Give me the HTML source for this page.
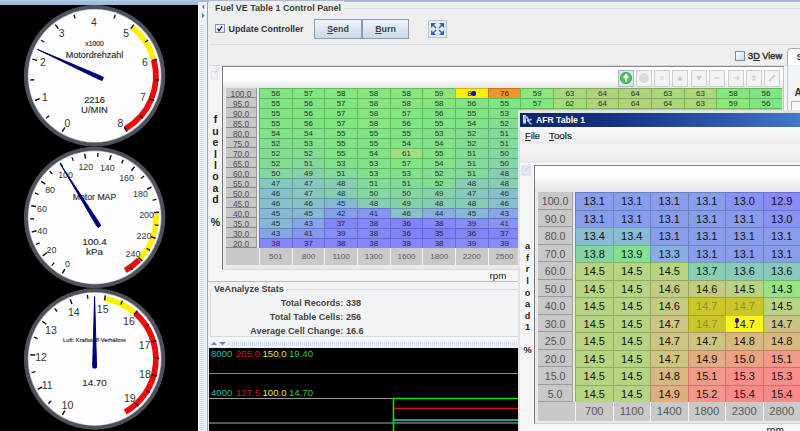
<!DOCTYPE html>
<html><head><meta charset="utf-8"><title>Fuel VE Table 1</title>
<style>
html,body{margin:0;padding:0}
body{width:800px;height:431px;overflow:hidden;position:relative;background:#eeeeee;font-family:"Liberation Sans", sans-serif;font-size:11px;color:#333}
.a{position:absolute}
.b{font-weight:bold}
.c{position:absolute;text-align:center;white-space:nowrap;overflow:hidden}
svg text{font-family:"Liberation Sans", sans-serif}
u{text-decoration:underline}
</style></head><body>

<div class="a" style="left:0;top:0;width:800px;height:2px;background:#a9b9d2"></div>
<div class="a" style="left:0;top:0;width:199px;height:5px;background:linear-gradient(#abcfd8 0,#abcfd8 1.2px,#a2b7e8 2px,#a2b7e8 100%)"></div>
<div class="a" style="left:0;top:5px;width:198px;height:426px;background:#000"></div>
<svg class="a" style="left:0;top:0" width="198" height="431" viewBox="0 0 198 431">
<circle cx="94.6" cy="75.8" r="70.7" fill="#4e505a"/>
<circle cx="94.6" cy="75.8" r="66.9" fill="#a9aab4"/>
<circle cx="94.6" cy="75.8" r="66.2" fill="#fefefe"/>
<path d="M131.92 27.17 A61.300000000000004 61.300000000000004 0 0 1 153.81 59.93" fill="none" stroke="#fff000" stroke-width="5.8"/>
<path d="M153.81 59.93 A61.300000000000004 61.300000000000004 0 0 1 125.25 128.89" fill="none" stroke="#ee0a0a" stroke-width="5.8"/>
<line x1="64.85" y1="127.33" x2="62.35" y2="131.66" stroke="#111" stroke-width="1.5"/>
<line x1="49.11" y1="115.69" x2="46.11" y2="118.33" stroke="#111" stroke-width="1.3"/>
<line x1="39.63" y1="98.57" x2="35.01" y2="100.48" stroke="#111" stroke-width="1.5"/>
<line x1="34.23" y1="79.76" x2="30.24" y2="80.02" stroke="#111" stroke-width="1.3"/>
<line x1="37.13" y1="60.40" x2="32.30" y2="59.11" stroke="#111" stroke-width="1.5"/>
<line x1="44.30" y1="42.19" x2="40.97" y2="39.97" stroke="#111" stroke-width="1.3"/>
<line x1="58.38" y1="28.60" x2="55.33" y2="24.63" stroke="#111" stroke-width="1.5"/>
<line x1="75.15" y1="18.51" x2="73.87" y2="14.72" stroke="#111" stroke-width="1.3"/>
<line x1="114.05" y1="18.51" x2="115.33" y2="14.72" stroke="#111" stroke-width="1.3"/>
<line x1="130.82" y1="28.60" x2="133.87" y2="24.63" stroke="#111" stroke-width="1.5"/>
<line x1="144.90" y1="42.19" x2="148.23" y2="39.97" stroke="#111" stroke-width="1.3"/>
<line x1="152.07" y1="60.40" x2="156.90" y2="59.11" stroke="#111" stroke-width="1.5"/>
<line x1="154.97" y1="79.76" x2="158.96" y2="80.02" stroke="#111" stroke-width="1.3"/>
<line x1="149.57" y1="98.57" x2="154.19" y2="100.48" stroke="#111" stroke-width="1.5"/>
<line x1="140.09" y1="115.69" x2="143.09" y2="118.33" stroke="#111" stroke-width="1.3"/>
<line x1="124.35" y1="127.33" x2="126.85" y2="131.66" stroke="#111" stroke-width="1.5"/>
<text x="67.4" y="126.5" font-size="10.4" text-anchor="middle" fill="#333">0</text>
<text x="45.0" y="100.5" font-size="10.4" text-anchor="middle" fill="#333">1</text>
<text x="42.8" y="66.0" font-size="10.4" text-anchor="middle" fill="#333">2</text>
<text x="61.7" y="37.3" font-size="10.4" text-anchor="middle" fill="#333">3</text>
<text x="93.9" y="26.1" font-size="10.4" text-anchor="middle" fill="#333">4</text>
<text x="126.1" y="37.3" font-size="10.4" text-anchor="middle" fill="#333">5</text>
<text x="145.0" y="66.0" font-size="10.4" text-anchor="middle" fill="#333">6</text>
<text x="142.8" y="100.5" font-size="10.4" text-anchor="middle" fill="#333">7</text>
<text x="120.3" y="126.5" font-size="10.4" text-anchor="middle" fill="#333">8</text>
<text x="94.5" y="46.4" font-size="6.8" font-weight="normal" text-anchor="middle" fill="#2a2a2a" stroke="#2a2a2a" stroke-width="0.15">x1000</text>
<text x="94.5" y="58.4" font-size="9" font-weight="normal" text-anchor="middle" fill="#2a2a2a" stroke="#2a2a2a" stroke-width="0.15">Motordrehzahl</text>
<text x="94.5" y="102.8" font-size="9.3" font-weight="normal" text-anchor="middle" fill="#2a2a2a" stroke="#2a2a2a" stroke-width="0.15">2216</text>
<text x="94.5" y="113.0" font-size="9.5" font-weight="normal" text-anchor="middle" fill="#2a2a2a" stroke="#2a2a2a" stroke-width="0.15">U/MIN</text>
<polygon points="37.67,49.51 100.85,76.05 103.46,77.56 102.14,80.47 99.28,79.51" fill="#00007c" stroke="#00007c" stroke-width="1" stroke-linejoin="round"/>
<circle cx="94.6" cy="217.5" r="70.7" fill="#4e505a"/>
<circle cx="94.6" cy="217.5" r="66.9" fill="#a9aab4"/>
<circle cx="94.6" cy="217.5" r="66.2" fill="#fefefe"/>
<path d="M155.69 212.47 A61.300000000000004 61.300000000000004 0 0 1 139.04 259.72" fill="none" stroke="#fff000" stroke-width="5.8"/>
<path d="M139.04 259.72 A61.300000000000004 61.300000000000004 0 0 1 125.25 270.59" fill="none" stroke="#ee0a0a" stroke-width="5.8"/>
<line x1="64.85" y1="269.03" x2="62.35" y2="273.36" stroke="#111" stroke-width="1.5"/>
<line x1="54.30" y1="262.63" x2="51.64" y2="265.61" stroke="#111" stroke-width="1.3"/>
<line x1="46.75" y1="252.87" x2="42.73" y2="255.84" stroke="#111" stroke-width="1.5"/>
<line x1="39.64" y1="242.79" x2="36.00" y2="244.46" stroke="#111" stroke-width="1.3"/>
<line x1="36.61" y1="230.83" x2="31.74" y2="231.94" stroke="#111" stroke-width="1.5"/>
<line x1="34.11" y1="218.74" x2="30.11" y2="218.82" stroke="#111" stroke-width="1.3"/>
<line x1="36.11" y1="206.57" x2="31.20" y2="205.65" stroke="#111" stroke-width="1.5"/>
<line x1="38.65" y1="194.49" x2="34.95" y2="192.97" stroke="#111" stroke-width="1.3"/>
<line x1="45.34" y1="184.13" x2="41.20" y2="181.32" stroke="#111" stroke-width="1.5"/>
<line x1="52.48" y1="174.07" x2="49.70" y2="171.19" stroke="#111" stroke-width="1.3"/>
<line x1="62.76" y1="167.24" x2="60.08" y2="163.01" stroke="#111" stroke-width="1.5"/>
<line x1="73.33" y1="160.86" x2="71.92" y2="157.12" stroke="#111" stroke-width="1.3"/>
<line x1="85.47" y1="158.70" x2="84.71" y2="153.76" stroke="#111" stroke-width="1.5"/>
<line x1="97.70" y1="157.08" x2="97.91" y2="153.08" stroke="#111" stroke-width="1.3"/>
<line x1="109.70" y1="159.95" x2="110.97" y2="155.11" stroke="#111" stroke-width="1.5"/>
<line x1="121.57" y1="163.34" x2="123.35" y2="159.76" stroke="#111" stroke-width="1.3"/>
<line x1="131.42" y1="170.76" x2="134.52" y2="166.84" stroke="#111" stroke-width="1.5"/>
<line x1="140.95" y1="178.61" x2="144.01" y2="176.04" stroke="#111" stroke-width="1.3"/>
<line x1="147.02" y1="189.35" x2="151.43" y2="186.99" stroke="#111" stroke-width="1.5"/>
<line x1="152.62" y1="200.35" x2="156.45" y2="199.21" stroke="#111" stroke-width="1.3"/>
<line x1="153.90" y1="212.62" x2="158.88" y2="212.21" stroke="#111" stroke-width="1.5"/>
<line x1="154.64" y1="224.93" x2="158.61" y2="225.43" stroke="#111" stroke-width="1.3"/>
<line x1="150.92" y1="236.70" x2="155.65" y2="238.31" stroke="#111" stroke-width="1.5"/>
<line x1="146.68" y1="248.29" x2="150.12" y2="250.32" stroke="#111" stroke-width="1.3"/>
<line x1="138.57" y1="257.58" x2="142.27" y2="260.95" stroke="#111" stroke-width="1.5"/>
<line x1="130.06" y1="266.52" x2="132.40" y2="269.76" stroke="#111" stroke-width="1.3"/>
<text x="67.4" y="267.0" font-size="8.9" text-anchor="middle" fill="#333">0</text>
<text x="51.4" y="252.8" font-size="8.9" text-anchor="middle" fill="#333">20</text>
<text x="42.3" y="233.5" font-size="8.9" text-anchor="middle" fill="#333">40</text>
<text x="41.9" y="212.2" font-size="8.9" text-anchor="middle" fill="#333">60</text>
<text x="50.1" y="192.5" font-size="8.9" text-anchor="middle" fill="#333">80</text>
<text x="65.6" y="177.7" font-size="8.9" text-anchor="middle" fill="#333">100</text>
<text x="85.8" y="170.2" font-size="8.9" text-anchor="middle" fill="#333">120</text>
<text x="107.3" y="171.3" font-size="8.9" text-anchor="middle" fill="#333">140</text>
<text x="126.6" y="180.8" font-size="8.9" text-anchor="middle" fill="#333">160</text>
<text x="140.5" y="197.1" font-size="8.9" text-anchor="middle" fill="#333">180</text>
<text x="146.6" y="217.5" font-size="8.9" text-anchor="middle" fill="#333">200</text>
<text x="144.0" y="238.6" font-size="8.9" text-anchor="middle" fill="#333">220</text>
<text x="133.0" y="257.0" font-size="8.9" text-anchor="middle" fill="#333">240</text>
<text x="94.5" y="200" font-size="8.7" font-weight="normal" text-anchor="middle" fill="#2a2a2a" stroke="#2a2a2a" stroke-width="0.15">Motor MAP</text>
<text x="94.5" y="244.6" font-size="9.8" font-weight="normal" text-anchor="middle" fill="#2a2a2a" stroke="#2a2a2a" stroke-width="0.15">100.4</text>
<text x="94.5" y="255.2" font-size="9.8" font-weight="normal" text-anchor="middle" fill="#2a2a2a" stroke="#2a2a2a" stroke-width="0.15">kPa</text>
<polygon points="61.59,165.93 99.38,223.09 100.71,225.80 97.99,227.49 96.16,225.10" fill="#00007c" stroke="#00007c" stroke-width="1" stroke-linejoin="round"/>
<circle cx="94.6" cy="359" r="70.7" fill="#4e505a"/>
<circle cx="94.6" cy="359" r="66.9" fill="#a9aab4"/>
<circle cx="94.6" cy="359" r="66.2" fill="#fefefe"/>
<path d="M104.80 298.55 A61.300000000000004 61.300000000000004 0 0 1 135.21 313.08" fill="none" stroke="#fff000" stroke-width="5.8"/>
<path d="M135.21 313.08 A61.300000000000004 61.300000000000004 0 0 1 125.25 412.09" fill="none" stroke="#ee0a0a" stroke-width="5.8"/>
<line x1="64.85" y1="410.53" x2="62.35" y2="414.86" stroke="#111" stroke-width="1.5"/>
<line x1="51.11" y1="401.06" x2="48.24" y2="403.84" stroke="#111" stroke-width="1.3"/>
<line x1="42.11" y1="387.01" x2="37.69" y2="389.37" stroke="#111" stroke-width="1.5"/>
<line x1="35.45" y1="371.71" x2="31.54" y2="372.55" stroke="#111" stroke-width="1.3"/>
<line x1="35.23" y1="355.03" x2="30.24" y2="354.69" stroke="#111" stroke-width="1.5"/>
<line x1="37.67" y1="338.52" x2="33.91" y2="337.16" stroke="#111" stroke-width="1.3"/>
<line x1="46.31" y1="324.24" x2="42.25" y2="321.32" stroke="#111" stroke-width="1.5"/>
<line x1="57.11" y1="311.52" x2="54.63" y2="308.38" stroke="#111" stroke-width="1.3"/>
<line x1="71.98" y1="303.97" x2="70.08" y2="299.34" stroke="#111" stroke-width="1.5"/>
<line x1="87.87" y1="298.88" x2="87.43" y2="294.90" stroke="#111" stroke-width="1.3"/>
<line x1="104.50" y1="300.33" x2="105.33" y2="295.40" stroke="#111" stroke-width="1.5"/>
<line x1="120.68" y1="304.41" x2="122.40" y2="300.80" stroke="#111" stroke-width="1.3"/>
<line x1="134.02" y1="314.43" x2="137.33" y2="310.68" stroke="#111" stroke-width="1.5"/>
<line x1="145.59" y1="326.45" x2="148.97" y2="324.29" stroke="#111" stroke-width="1.3"/>
<line x1="151.62" y1="342.01" x2="156.41" y2="340.58" stroke="#111" stroke-width="1.5"/>
<line x1="155.10" y1="358.33" x2="159.10" y2="358.28" stroke="#111" stroke-width="1.3"/>
<line x1="151.99" y1="374.72" x2="156.81" y2="376.04" stroke="#111" stroke-width="1.5"/>
<line x1="146.31" y1="390.41" x2="149.73" y2="392.49" stroke="#111" stroke-width="1.3"/>
<line x1="135.00" y1="402.68" x2="138.40" y2="406.35" stroke="#111" stroke-width="1.5"/>
<text x="67.4" y="409.2" font-size="10.6" text-anchor="middle" fill="#333">10</text>
<text x="47.2" y="388.6" font-size="10.6" text-anchor="middle" fill="#333">11</text>
<text x="41.1" y="360.6" font-size="10.6" text-anchor="middle" fill="#333">12</text>
<text x="51.0" y="333.7" font-size="10.6" text-anchor="middle" fill="#333">13</text>
<text x="73.8" y="315.9" font-size="10.6" text-anchor="middle" fill="#333">14</text>
<text x="102.7" y="312.7" font-size="10.6" text-anchor="middle" fill="#333">15</text>
<text x="128.9" y="325.1" font-size="10.6" text-anchor="middle" fill="#333">16</text>
<text x="144.6" y="349.2" font-size="10.6" text-anchor="middle" fill="#333">17</text>
<text x="144.9" y="377.9" font-size="10.6" text-anchor="middle" fill="#333">18</text>
<text x="129.8" y="402.4" font-size="10.6" text-anchor="middle" fill="#333">19</text>
<text x="94.5" y="341.5" font-size="5.76" font-weight="normal" text-anchor="middle" fill="#2a2a2a" stroke="#2a2a2a" stroke-width="0.15">Luft: Kraftstoff-Verhältnis</text>
<text x="94.5" y="386" font-size="9.8" font-weight="normal" text-anchor="middle" fill="#2a2a2a" stroke="#2a2a2a" stroke-width="0.15">14.70</text>
<polygon points="94.60,296.50 96.50,365.00 96.20,368.00 93.00,368.00 92.70,365.00" fill="#00007c" stroke="#00007c" stroke-width="1" stroke-linejoin="round"/>
</svg>
<div class="a" style="left:198px;top:2px;width:10px;height:429px;background:#eef2f8;border-left:1px solid #fff;box-sizing:border-box"></div>
<svg class="a" style="left:198px;top:3px" width="10" height="428"><polygon points="6.3,1.2 6.3,6.2 3.8,3.7" fill="#6a80ae"/><polygon points="4,9.6 4,15.4 6.8,12.5" fill="#6a80ae"/><line x1="4.5" y1="22" x2="4.5" y2="428" stroke="#cfd9e8" stroke-width="4" stroke-dasharray="1 1"/></svg>
<div class="a" style="left:207px;top:2px;width:593px;height:429px;background:#eeeeee;border-left:1.6px solid #9ca3ae;box-sizing:border-box"></div>
<div class="a" style="left:210px;top:8px;width:590px;height:37px;border-top:1px solid #d6dde9;border-bottom:1px solid #d6dde9;box-sizing:border-box;background:linear-gradient(#f0f0f0,#ededed)"></div>
<div class="a b" style="left:209px;top:0.8px;height:14px;line-height:14px;padding:0 3px 0 6px;background:#eeeeee;font-size:8.95px;color:#3c3c3c">Fuel VE Table 1 Control Panel</div>
<div class="a" style="left:215.4px;top:24.2px;width:9.4px;height:9.2px;border:1px solid #8797b2;box-sizing:border-box;background:linear-gradient(135deg,#fdfeff,#d5e2f4)"></div>
<svg class="a" style="left:215.4px;top:24.2px" width="10" height="10"><path d="M2.4 4.6 L3.9 6.8 L7.1 2.4" fill="none" stroke="#222" stroke-width="1.4"/></svg>
<div class="a b" style="left:228.5px;top:22px;height:14px;line-height:14px;font-size:8.9px;color:#333">Update Controller</div>
<div class="c b" style="left:314px;top:19px;width:48px;height:20px;line-height:19px;box-sizing:border-box;border:1px solid #8d9bb0;background:linear-gradient(#f1f5fa,#dde7f2 50%,#c9d7e8);font-size:8.9px;color:#404040"><u>S</u>end</div>
<div class="c b" style="left:362px;top:19px;width:47px;height:20px;line-height:19px;box-sizing:border-box;border:1px solid #8d9bb0;background:linear-gradient(#f1f5fa,#dde7f2 50%,#c9d7e8);font-size:8.9px;color:#404040"><u>B</u>urn</div>
<div class="a" style="left:428px;top:20px;width:19px;height:18px;box-sizing:border-box;border:1px solid #b5c3d6;background:#e4ecf6"></div>
<svg class="a" style="left:428px;top:20px" width="19" height="18"><g fill="#2f63b4"><polygon points="3,3 8,3 3,8"/><polygon points="16,3 11,3 16,8"/><polygon points="3,15 8,15 3,10"/><polygon points="16,15 11,15 16,10"/></g><g stroke="#2f63b4" stroke-width="1.4"><line x1="4" y1="4" x2="8" y2="8"/><line x1="15" y1="4" x2="11" y2="8"/><line x1="4" y1="14" x2="8" y2="10"/><line x1="15" y1="14" x2="11" y2="10"/></g></svg>
<div class="a" style="left:735px;top:51px;width:10px;height:10px;border:1px solid #7b8aa0;box-sizing:border-box;background:linear-gradient(135deg,#fff,#c8dcf4)"></div>
<div class="a" style="left:748px;top:49px;height:14px;line-height:14px;font-size:9.2px;color:#333;-webkit-text-stroke:0.45px #333">3<u>D</u> View</div>
<div class="a" style="left:787px;top:48px;width:20px;height:18px;border:1px solid #9aa7ba;border-radius:4px 0 0 0;background:#fff;box-sizing:border-box"></div>
<div class="a b" style="left:796.5px;top:50px;font-size:9.5px;line-height:14px">S</div>
<div class="a" style="left:787px;top:65px;width:20px;height:50px;border-left:1px solid #b9c4d4;background:#f2f3f5"></div>
<div class="a b" style="left:794.5px;top:86px;font-size:10px;line-height:14px;color:#333">A</div>
<div class="a" style="left:791px;top:101px;width:12px;height:12px;border:1px solid #aab4c4;background:#fafafa"></div>
<div class="a" style="left:209px;top:65px;width:578px;height:216px;background:#f5f5f5;border-top:1px solid #d3dbe8;box-sizing:border-box"></div>
<div class="a" style="left:221.8px;top:65.8px;width:562.2px;height:204.2px;box-sizing:border-box;border:1.8px solid #787878;border-top-color:#8a8a8a;border-right:1px solid #c4c4c4;border-bottom:1px solid #d8d8d8;background:linear-gradient(#ffffff 0,#fdfdfd 13px,#e2e2e2 22px,#e9e9e9 23px,#eaeaea 100%)"></div>
<svg class="a" style="left:209.5px;top:66px" width="12" height="14"><rect x="1" y="5.5" width="6.5" height="7.5" fill="#e9f0f9" stroke="#d6e0ee" stroke-width="0.8"/><line x1="5" y1="7" x2="9" y2="2" stroke="#e8cfc0" stroke-width="1.3"/></svg>
<div class="c b" style="left:209px;top:113.4px;width:13px;height:12px;line-height:12px;font-size:10.5px;color:#222">f</div>
<div class="c b" style="left:209px;top:124.8px;width:13px;height:12px;line-height:12px;font-size:10.5px;color:#222">u</div>
<div class="c b" style="left:209px;top:136.2px;width:13px;height:12px;line-height:12px;font-size:10.5px;color:#222">e</div>
<div class="c b" style="left:209px;top:147.6px;width:13px;height:12px;line-height:12px;font-size:10.5px;color:#222">l</div>
<div class="c b" style="left:209px;top:159.0px;width:13px;height:12px;line-height:12px;font-size:10.5px;color:#222">l</div>
<div class="c b" style="left:209px;top:170.4px;width:13px;height:12px;line-height:12px;font-size:10.5px;color:#222">o</div>
<div class="c b" style="left:209px;top:181.8px;width:13px;height:12px;line-height:12px;font-size:10.5px;color:#222">a</div>
<div class="c b" style="left:209px;top:193.2px;width:13px;height:12px;line-height:12px;font-size:10.5px;color:#222">d</div>
<div class="c b" style="left:209px;top:216.0px;width:13px;height:12px;line-height:12px;font-size:10.5px;color:#222">%</div>
<div class="a" style="left:617.5px;top:69.5px;width:16px;height:17px;box-sizing:border-box;border:1px solid #9fb8dc;background:#dbe6f5"></div>
<svg class="a" style="left:617.5px;top:70px" width="16" height="16"><circle cx="8" cy="8" r="5.6" fill="#4cc450" stroke="#2f9a35" stroke-width="0.8"/><path d="M8 11.5 V6.5 M5.8 8 L8 5 L10.2 8" fill="none" stroke="#f2fff2" stroke-width="1.9"/></svg>
<div class="a" style="left:636px;top:69.5px;width:16px;height:17px;box-sizing:border-box;border:1px solid #cdcdcd;background:#f3f3f3"></div>
<div class="a" style="left:654px;top:69.5px;width:16px;height:17px;box-sizing:border-box;border:1px solid #cdcdcd;background:#f3f3f3"></div>
<div class="a" style="left:672.3px;top:69.5px;width:16px;height:17px;box-sizing:border-box;border:1px solid #cdcdcd;background:#f3f3f3"></div>
<div class="a" style="left:690.7px;top:69.5px;width:16px;height:17px;box-sizing:border-box;border:1px solid #cdcdcd;background:#f3f3f3"></div>
<div class="a" style="left:709.2px;top:69.5px;width:16px;height:17px;box-sizing:border-box;border:1px solid #cdcdcd;background:#f3f3f3"></div>
<div class="a" style="left:727.6px;top:69.5px;width:16px;height:17px;box-sizing:border-box;border:1px solid #cdcdcd;background:#f3f3f3"></div>
<div class="a" style="left:746.4px;top:69.5px;width:16px;height:17px;box-sizing:border-box;border:1px solid #cdcdcd;background:#f3f3f3"></div>
<div class="a" style="left:764.3px;top:69.5px;width:16px;height:17px;box-sizing:border-box;border:1px solid #cdcdcd;background:#f3f3f3"></div>
<svg class="a" style="left:636px;top:70px" width="16" height="16"><circle cx="8" cy="8" r="5" fill="#dcdcdc"/></svg>
<svg class="a" style="left:654px;top:70px" width="16" height="16"><path d="M6 7h4M6 9h4" stroke="#cecece" stroke-width="1.2"/></svg>
<svg class="a" style="left:672.3px;top:70px" width="16" height="16"><polygon points="8,5.5 10.8,10.5 5.2,10.5" fill="#c8c8c8"/></svg>
<svg class="a" style="left:690.7px;top:70px" width="16" height="16"><polygon points="8,10.8 10.8,6 5.2,6" fill="#c8c8c8"/></svg>
<svg class="a" style="left:709.2px;top:70px" width="16" height="16"><path d="M5.5 8h5" stroke="#c4c4c4" stroke-width="1.3"/></svg>
<svg class="a" style="left:727.6px;top:70px" width="16" height="16"><path d="M5.5 8h5M8.8 6l2 2-2 2" stroke="#d2d2d2" stroke-width="1.2" fill="none"/></svg>
<svg class="a" style="left:746.4px;top:70px" width="16" height="16"><path d="M6 6l4 4M10 6l-4 4M8 5v6" stroke="#d2d2d2" stroke-width="1.3"/></svg>
<svg class="a" style="left:764.3px;top:70px" width="16" height="16"><path d="M5 11l6-6" stroke="#cfcfcf" stroke-width="2"/></svg>
<div class="c" style="left:226px;top:88.4px;width:30px;height:8.98px;line-height:13.18px;background:#c8c8c8;border-bottom:1px solid #858585;border-right:1.6px solid #999;font-size:8.3px;color:#4c4c4c">100.0</div>
<div class="c" style="left:226px;top:98.4px;width:30px;height:8.98px;line-height:13.18px;background:#c8c8c8;border-bottom:1px solid #858585;border-right:1.6px solid #999;font-size:8.3px;color:#4c4c4c">95.0</div>
<div class="c" style="left:226px;top:108.4px;width:30px;height:8.98px;line-height:13.18px;background:#c8c8c8;border-bottom:1px solid #858585;border-right:1.6px solid #999;font-size:8.3px;color:#4c4c4c">90.0</div>
<div class="c" style="left:226px;top:118.3px;width:30px;height:8.98px;line-height:13.18px;background:#c8c8c8;border-bottom:1px solid #858585;border-right:1.6px solid #999;font-size:8.3px;color:#4c4c4c">85.0</div>
<div class="c" style="left:226px;top:128.3px;width:30px;height:8.98px;line-height:13.18px;background:#c8c8c8;border-bottom:1px solid #858585;border-right:1.6px solid #999;font-size:8.3px;color:#4c4c4c">80.0</div>
<div class="c" style="left:226px;top:138.3px;width:30px;height:8.98px;line-height:13.18px;background:#c8c8c8;border-bottom:1px solid #858585;border-right:1.6px solid #999;font-size:8.3px;color:#4c4c4c">75.0</div>
<div class="c" style="left:226px;top:148.3px;width:30px;height:8.98px;line-height:13.18px;background:#c8c8c8;border-bottom:1px solid #858585;border-right:1.6px solid #999;font-size:8.3px;color:#4c4c4c">70.0</div>
<div class="c" style="left:226px;top:158.3px;width:30px;height:8.98px;line-height:13.18px;background:#c8c8c8;border-bottom:1px solid #858585;border-right:1.6px solid #999;font-size:8.3px;color:#4c4c4c">65.0</div>
<div class="c" style="left:226px;top:168.2px;width:30px;height:8.98px;line-height:13.18px;background:#c8c8c8;border-bottom:1px solid #858585;border-right:1.6px solid #999;font-size:8.3px;color:#4c4c4c">60.0</div>
<div class="c" style="left:226px;top:178.2px;width:30px;height:8.98px;line-height:13.18px;background:#c8c8c8;border-bottom:1px solid #858585;border-right:1.6px solid #999;font-size:8.3px;color:#4c4c4c">55.0</div>
<div class="c" style="left:226px;top:188.2px;width:30px;height:8.98px;line-height:13.18px;background:#c8c8c8;border-bottom:1px solid #858585;border-right:1.6px solid #999;font-size:8.3px;color:#4c4c4c">50.0</div>
<div class="c" style="left:226px;top:198.2px;width:30px;height:8.98px;line-height:13.18px;background:#c8c8c8;border-bottom:1px solid #858585;border-right:1.6px solid #999;font-size:8.3px;color:#4c4c4c">45.0</div>
<div class="c" style="left:226px;top:208.2px;width:30px;height:8.98px;line-height:13.18px;background:#c8c8c8;border-bottom:1px solid #858585;border-right:1.6px solid #999;font-size:8.3px;color:#4c4c4c">40.0</div>
<div class="c" style="left:226px;top:218.1px;width:30px;height:8.98px;line-height:13.18px;background:#c8c8c8;border-bottom:1px solid #858585;border-right:1.6px solid #999;font-size:8.3px;color:#4c4c4c">35.0</div>
<div class="c" style="left:226px;top:228.1px;width:30px;height:8.98px;line-height:13.18px;background:#c8c8c8;border-bottom:1px solid #858585;border-right:1.6px solid #999;font-size:8.3px;color:#4c4c4c">30.0</div>
<div class="c" style="left:226px;top:238.1px;width:30px;height:8.98px;line-height:13.18px;background:#c8c8c8;border-bottom:1px solid #858585;border-right:1.6px solid #999;font-size:8.3px;color:#4c4c4c">20.0</div>
<div class="c" style="left:258.90px;top:88.4px;width:32.68px;height:9.98px;line-height:10.38px;box-sizing:border-box;background:#80e683;border-left:1px solid #64b466;border-top:1px solid #64b466;font-size:8.0px;color:#1c331d">56</div>
<div class="c" style="left:291.58px;top:88.4px;width:32.68px;height:9.98px;line-height:10.38px;box-sizing:border-box;background:#80e880;border-left:1px solid #64b564;border-top:1px solid #64b564;font-size:8.0px;color:#1c331c">57</div>
<div class="c" style="left:324.26px;top:88.4px;width:32.68px;height:9.98px;line-height:10.38px;box-sizing:border-box;background:#87e77f;border-left:1px solid #6ab463;border-top:1px solid #6ab463;font-size:8.0px;color:#1e331c">58</div>
<div class="c" style="left:356.94px;top:88.4px;width:32.68px;height:9.98px;line-height:10.38px;box-sizing:border-box;background:#87e77f;border-left:1px solid #6ab463;border-top:1px solid #6ab463;font-size:8.0px;color:#1e331c">58</div>
<div class="c" style="left:389.62px;top:88.4px;width:32.68px;height:9.98px;line-height:10.38px;box-sizing:border-box;background:#87e77f;border-left:1px solid #6ab463;border-top:1px solid #6ab463;font-size:8.0px;color:#1e331c">58</div>
<div class="c" style="left:422.30px;top:88.4px;width:32.68px;height:9.98px;line-height:10.38px;box-sizing:border-box;background:#8fe57e;border-left:1px solid #6fb362;border-top:1px solid #6fb362;font-size:8.0px;color:#1f321c">59</div>
<div class="c" style="left:454.98px;top:88.4px;width:32.68px;height:9.98px;line-height:10.38px;box-sizing:border-box;background:#fff00a;border-left:1px solid #c7bb08;border-top:1px solid #c7bb08;font-size:8.0px;color:#370d0d">84</div>
<div class="c" style="left:487.66px;top:88.4px;width:32.68px;height:9.98px;line-height:10.38px;box-sizing:border-box;background:#f09628;border-left:1px solid #bb751f;border-top:1px solid #bb751f;font-size:8.0px;color:#352109">76</div>
<div class="c" style="left:520.34px;top:88.4px;width:32.68px;height:9.98px;line-height:10.38px;box-sizing:border-box;background:#8fe57e;border-left:1px solid #6fb362;border-top:1px solid #6fb362;font-size:8.0px;color:#1f321c">59</div>
<div class="c" style="left:553.02px;top:88.4px;width:32.68px;height:9.98px;line-height:10.38px;box-sizing:border-box;background:#aad87d;border-left:1px solid #85a862;border-top:1px solid #85a862;font-size:8.0px;color:#25301c">63</div>
<div class="c" style="left:585.70px;top:88.4px;width:32.68px;height:9.98px;line-height:10.38px;box-sizing:border-box;background:#afd47d;border-left:1px solid #88a562;border-top:1px solid #88a562;font-size:8.0px;color:#262f1c">64</div>
<div class="c" style="left:618.38px;top:88.4px;width:32.68px;height:9.98px;line-height:10.38px;box-sizing:border-box;background:#afd47d;border-left:1px solid #88a562;border-top:1px solid #88a562;font-size:8.0px;color:#262f1c">64</div>
<div class="c" style="left:651.06px;top:88.4px;width:32.68px;height:9.98px;line-height:10.38px;box-sizing:border-box;background:#aad87d;border-left:1px solid #85a862;border-top:1px solid #85a862;font-size:8.0px;color:#25301c">63</div>
<div class="c" style="left:683.74px;top:88.4px;width:32.68px;height:9.98px;line-height:10.38px;box-sizing:border-box;background:#aad87d;border-left:1px solid #85a862;border-top:1px solid #85a862;font-size:8.0px;color:#25301c">63</div>
<div class="c" style="left:716.42px;top:88.4px;width:32.68px;height:9.98px;line-height:10.38px;box-sizing:border-box;background:#87e77f;border-left:1px solid #6ab463;border-top:1px solid #6ab463;font-size:8.0px;color:#1e331c">58</div>
<div class="c" style="left:749.10px;top:88.4px;width:32.68px;height:9.98px;line-height:10.38px;box-sizing:border-box;background:#80e683;border-left:1px solid #64b466;border-top:1px solid #64b466;font-size:8.0px;color:#1c331d">56</div>
<div class="c" style="left:258.90px;top:98.4px;width:32.68px;height:9.98px;line-height:10.38px;box-sizing:border-box;background:#81e586;border-left:1px solid #65b369;border-top:1px solid #65b369;font-size:8.0px;color:#1c321d">55</div>
<div class="c" style="left:291.58px;top:98.4px;width:32.68px;height:9.98px;line-height:10.38px;box-sizing:border-box;background:#80e683;border-left:1px solid #64b466;border-top:1px solid #64b466;font-size:8.0px;color:#1c331d">56</div>
<div class="c" style="left:324.26px;top:98.4px;width:32.68px;height:9.98px;line-height:10.38px;box-sizing:border-box;background:#80e880;border-left:1px solid #64b564;border-top:1px solid #64b564;font-size:8.0px;color:#1c331c">57</div>
<div class="c" style="left:356.94px;top:98.4px;width:32.68px;height:9.98px;line-height:10.38px;box-sizing:border-box;background:#87e77f;border-left:1px solid #6ab463;border-top:1px solid #6ab463;font-size:8.0px;color:#1e331c">58</div>
<div class="c" style="left:389.62px;top:98.4px;width:32.68px;height:9.98px;line-height:10.38px;box-sizing:border-box;background:#87e77f;border-left:1px solid #6ab463;border-top:1px solid #6ab463;font-size:8.0px;color:#1e331c">58</div>
<div class="c" style="left:422.30px;top:98.4px;width:32.68px;height:9.98px;line-height:10.38px;box-sizing:border-box;background:#87e77f;border-left:1px solid #6ab463;border-top:1px solid #6ab463;font-size:8.0px;color:#1e331c">58</div>
<div class="c" style="left:454.98px;top:98.4px;width:32.68px;height:9.98px;line-height:10.38px;box-sizing:border-box;background:#80e683;border-left:1px solid #64b466;border-top:1px solid #64b466;font-size:8.0px;color:#1c331d">56</div>
<div class="c" style="left:487.66px;top:98.4px;width:32.68px;height:9.98px;line-height:10.38px;box-sizing:border-box;background:#81e586;border-left:1px solid #65b369;border-top:1px solid #65b369;font-size:8.0px;color:#1c321d">55</div>
<div class="c" style="left:520.34px;top:98.4px;width:32.68px;height:9.98px;line-height:10.38px;box-sizing:border-box;background:#80e880;border-left:1px solid #64b564;border-top:1px solid #64b564;font-size:8.0px;color:#1c331c">57</div>
<div class="c" style="left:553.02px;top:98.4px;width:32.68px;height:9.98px;line-height:10.38px;box-sizing:border-box;background:#a5dc7d;border-left:1px solid #81ac62;border-top:1px solid #81ac62;font-size:8.0px;color:#24301c">62</div>
<div class="c" style="left:585.70px;top:98.4px;width:32.68px;height:9.98px;line-height:10.38px;box-sizing:border-box;background:#afd47d;border-left:1px solid #88a562;border-top:1px solid #88a562;font-size:8.0px;color:#262f1c">64</div>
<div class="c" style="left:618.38px;top:98.4px;width:32.68px;height:9.98px;line-height:10.38px;box-sizing:border-box;background:#afd47d;border-left:1px solid #88a562;border-top:1px solid #88a562;font-size:8.0px;color:#262f1c">64</div>
<div class="c" style="left:651.06px;top:98.4px;width:32.68px;height:9.98px;line-height:10.38px;box-sizing:border-box;background:#afd47d;border-left:1px solid #88a562;border-top:1px solid #88a562;font-size:8.0px;color:#262f1c">64</div>
<div class="c" style="left:683.74px;top:98.4px;width:32.68px;height:9.98px;line-height:10.38px;box-sizing:border-box;background:#aad87d;border-left:1px solid #85a862;border-top:1px solid #85a862;font-size:8.0px;color:#25301c">63</div>
<div class="c" style="left:716.42px;top:98.4px;width:32.68px;height:9.98px;line-height:10.38px;box-sizing:border-box;background:#8fe57e;border-left:1px solid #6fb362;border-top:1px solid #6fb362;font-size:8.0px;color:#1f321c">59</div>
<div class="c" style="left:749.10px;top:98.4px;width:32.68px;height:9.98px;line-height:10.38px;box-sizing:border-box;background:#80e683;border-left:1px solid #64b466;border-top:1px solid #64b466;font-size:8.0px;color:#1c331d">56</div>
<div class="c" style="left:258.90px;top:108.4px;width:32.68px;height:9.98px;line-height:10.38px;box-sizing:border-box;background:#81e586;border-left:1px solid #65b369;border-top:1px solid #65b369;font-size:8.0px;color:#1c321d">55</div>
<div class="c" style="left:291.58px;top:108.4px;width:32.68px;height:9.98px;line-height:10.38px;box-sizing:border-box;background:#80e683;border-left:1px solid #64b466;border-top:1px solid #64b466;font-size:8.0px;color:#1c331d">56</div>
<div class="c" style="left:324.26px;top:108.4px;width:32.68px;height:9.98px;line-height:10.38px;box-sizing:border-box;background:#80e880;border-left:1px solid #64b564;border-top:1px solid #64b564;font-size:8.0px;color:#1c331c">57</div>
<div class="c" style="left:356.94px;top:108.4px;width:32.68px;height:9.98px;line-height:10.38px;box-sizing:border-box;background:#87e77f;border-left:1px solid #6ab463;border-top:1px solid #6ab463;font-size:8.0px;color:#1e331c">58</div>
<div class="c" style="left:389.62px;top:108.4px;width:32.68px;height:9.98px;line-height:10.38px;box-sizing:border-box;background:#80e880;border-left:1px solid #64b564;border-top:1px solid #64b564;font-size:8.0px;color:#1c331c">57</div>
<div class="c" style="left:422.30px;top:108.4px;width:32.68px;height:9.98px;line-height:10.38px;box-sizing:border-box;background:#80e683;border-left:1px solid #64b466;border-top:1px solid #64b466;font-size:8.0px;color:#1c331d">56</div>
<div class="c" style="left:454.98px;top:108.4px;width:32.68px;height:9.98px;line-height:10.38px;box-sizing:border-box;background:#81e586;border-left:1px solid #65b369;border-top:1px solid #65b369;font-size:8.0px;color:#1c321d">55</div>
<div class="c" style="left:487.66px;top:108.4px;width:32.68px;height:9.98px;line-height:10.38px;box-sizing:border-box;background:#82e28c;border-left:1px solid #65b06d;border-top:1px solid #65b06d;font-size:8.0px;color:#1d321f">53</div>
<div class="c" style="left:520.34px;top:108.4px;width:32.68px;height:9.98px;line-height:10.38px;box-sizing:border-box;background:#81e586;border-left:1px solid #65b369;border-top:1px solid #65b369;font-size:8.0px;color:#1c321d"></div>
<div class="c" style="left:553.02px;top:108.4px;width:32.68px;height:9.98px;line-height:10.38px;box-sizing:border-box;background:#96e47d;border-left:1px solid #75b262;border-top:1px solid #75b262;font-size:8.0px;color:#21321c"></div>
<div class="c" style="left:585.70px;top:108.4px;width:32.68px;height:9.98px;line-height:10.38px;box-sizing:border-box;background:#aad87d;border-left:1px solid #85a862;border-top:1px solid #85a862;font-size:8.0px;color:#25301c"></div>
<div class="c" style="left:618.38px;top:108.4px;width:32.68px;height:9.98px;line-height:10.38px;box-sizing:border-box;background:#afd47d;border-left:1px solid #88a562;border-top:1px solid #88a562;font-size:8.0px;color:#262f1c"></div>
<div class="c" style="left:651.06px;top:108.4px;width:32.68px;height:9.98px;line-height:10.38px;box-sizing:border-box;background:#aad87d;border-left:1px solid #85a862;border-top:1px solid #85a862;font-size:8.0px;color:#25301c"></div>
<div class="c" style="left:683.74px;top:108.4px;width:32.68px;height:9.98px;line-height:10.38px;box-sizing:border-box;background:#a5dc7d;border-left:1px solid #81ac62;border-top:1px solid #81ac62;font-size:8.0px;color:#24301c"></div>
<div class="c" style="left:716.42px;top:108.4px;width:32.68px;height:9.98px;line-height:10.38px;box-sizing:border-box;background:#87e77f;border-left:1px solid #6ab463;border-top:1px solid #6ab463;font-size:8.0px;color:#1e331c"></div>
<div class="c" style="left:749.10px;top:108.4px;width:32.68px;height:9.98px;line-height:10.38px;box-sizing:border-box;background:#81e586;border-left:1px solid #65b369;border-top:1px solid #65b369;font-size:8.0px;color:#1c321d"></div>
<div class="c" style="left:258.90px;top:118.3px;width:32.68px;height:9.98px;line-height:10.38px;box-sizing:border-box;background:#81e586;border-left:1px solid #65b369;border-top:1px solid #65b369;font-size:8.0px;color:#1c321d">55</div>
<div class="c" style="left:291.58px;top:118.3px;width:32.68px;height:9.98px;line-height:10.38px;box-sizing:border-box;background:#80e683;border-left:1px solid #64b466;border-top:1px solid #64b466;font-size:8.0px;color:#1c331d">56</div>
<div class="c" style="left:324.26px;top:118.3px;width:32.68px;height:9.98px;line-height:10.38px;box-sizing:border-box;background:#80e880;border-left:1px solid #64b564;border-top:1px solid #64b564;font-size:8.0px;color:#1c331c">57</div>
<div class="c" style="left:356.94px;top:118.3px;width:32.68px;height:9.98px;line-height:10.38px;box-sizing:border-box;background:#87e77f;border-left:1px solid #6ab463;border-top:1px solid #6ab463;font-size:8.0px;color:#1e331c">58</div>
<div class="c" style="left:389.62px;top:118.3px;width:32.68px;height:9.98px;line-height:10.38px;box-sizing:border-box;background:#80e683;border-left:1px solid #64b466;border-top:1px solid #64b466;font-size:8.0px;color:#1c331d">56</div>
<div class="c" style="left:422.30px;top:118.3px;width:32.68px;height:9.98px;line-height:10.38px;box-sizing:border-box;background:#81e586;border-left:1px solid #65b369;border-top:1px solid #65b369;font-size:8.0px;color:#1c321d">55</div>
<div class="c" style="left:454.98px;top:118.3px;width:32.68px;height:9.98px;line-height:10.38px;box-sizing:border-box;background:#82e489;border-left:1px solid #65b16b;border-top:1px solid #65b16b;font-size:8.0px;color:#1c321e">54</div>
<div class="c" style="left:487.66px;top:118.3px;width:32.68px;height:9.98px;line-height:10.38px;box-sizing:border-box;background:#83de93;border-left:1px solid #66ad72;border-top:1px solid #66ad72;font-size:8.0px;color:#1d3120">52</div>
<div class="c" style="left:258.90px;top:128.3px;width:32.68px;height:9.98px;line-height:10.38px;box-sizing:border-box;background:#82e489;border-left:1px solid #65b16b;border-top:1px solid #65b16b;font-size:8.0px;color:#1c321e">54</div>
<div class="c" style="left:291.58px;top:128.3px;width:32.68px;height:9.98px;line-height:10.38px;box-sizing:border-box;background:#82e489;border-left:1px solid #65b16b;border-top:1px solid #65b16b;font-size:8.0px;color:#1c321e">54</div>
<div class="c" style="left:324.26px;top:128.3px;width:32.68px;height:9.98px;line-height:10.38px;box-sizing:border-box;background:#81e586;border-left:1px solid #65b369;border-top:1px solid #65b369;font-size:8.0px;color:#1c321d">55</div>
<div class="c" style="left:356.94px;top:128.3px;width:32.68px;height:9.98px;line-height:10.38px;box-sizing:border-box;background:#81e586;border-left:1px solid #65b369;border-top:1px solid #65b369;font-size:8.0px;color:#1c321d">55</div>
<div class="c" style="left:389.62px;top:128.3px;width:32.68px;height:9.98px;line-height:10.38px;box-sizing:border-box;background:#81e586;border-left:1px solid #65b369;border-top:1px solid #65b369;font-size:8.0px;color:#1c321d">55</div>
<div class="c" style="left:422.30px;top:128.3px;width:32.68px;height:9.98px;line-height:10.38px;box-sizing:border-box;background:#82e28c;border-left:1px solid #65b06d;border-top:1px solid #65b06d;font-size:8.0px;color:#1d321f">53</div>
<div class="c" style="left:454.98px;top:128.3px;width:32.68px;height:9.98px;line-height:10.38px;box-sizing:border-box;background:#83de93;border-left:1px solid #66ad72;border-top:1px solid #66ad72;font-size:8.0px;color:#1d3120">52</div>
<div class="c" style="left:487.66px;top:128.3px;width:32.68px;height:9.98px;line-height:10.38px;box-sizing:border-box;background:#83db99;border-left:1px solid #66ab78;border-top:1px solid #66ab78;font-size:8.0px;color:#1d3022">51</div>
<div class="c" style="left:258.90px;top:138.3px;width:32.68px;height:9.98px;line-height:10.38px;box-sizing:border-box;background:#83de93;border-left:1px solid #66ad72;border-top:1px solid #66ad72;font-size:8.0px;color:#1d3120">52</div>
<div class="c" style="left:291.58px;top:138.3px;width:32.68px;height:9.98px;line-height:10.38px;box-sizing:border-box;background:#82e28c;border-left:1px solid #65b06d;border-top:1px solid #65b06d;font-size:8.0px;color:#1d321f">53</div>
<div class="c" style="left:324.26px;top:138.3px;width:32.68px;height:9.98px;line-height:10.38px;box-sizing:border-box;background:#81e586;border-left:1px solid #65b369;border-top:1px solid #65b369;font-size:8.0px;color:#1c321d">55</div>
<div class="c" style="left:356.94px;top:138.3px;width:32.68px;height:9.98px;line-height:10.38px;box-sizing:border-box;background:#81e586;border-left:1px solid #65b369;border-top:1px solid #65b369;font-size:8.0px;color:#1c321d">55</div>
<div class="c" style="left:389.62px;top:138.3px;width:32.68px;height:9.98px;line-height:10.38px;box-sizing:border-box;background:#82e489;border-left:1px solid #65b16b;border-top:1px solid #65b16b;font-size:8.0px;color:#1c321e">54</div>
<div class="c" style="left:422.30px;top:138.3px;width:32.68px;height:9.98px;line-height:10.38px;box-sizing:border-box;background:#82e489;border-left:1px solid #65b16b;border-top:1px solid #65b16b;font-size:8.0px;color:#1c321e">54</div>
<div class="c" style="left:454.98px;top:138.3px;width:32.68px;height:9.98px;line-height:10.38px;box-sizing:border-box;background:#83de93;border-left:1px solid #66ad72;border-top:1px solid #66ad72;font-size:8.0px;color:#1d3120">52</div>
<div class="c" style="left:487.66px;top:138.3px;width:32.68px;height:9.98px;line-height:10.38px;box-sizing:border-box;background:#83db99;border-left:1px solid #66ab78;border-top:1px solid #66ab78;font-size:8.0px;color:#1d3022">51</div>
<div class="c" style="left:258.90px;top:148.3px;width:32.68px;height:9.98px;line-height:10.38px;box-sizing:border-box;background:#83de93;border-left:1px solid #66ad72;border-top:1px solid #66ad72;font-size:8.0px;color:#1d3120">52</div>
<div class="c" style="left:291.58px;top:148.3px;width:32.68px;height:9.98px;line-height:10.38px;box-sizing:border-box;background:#83de93;border-left:1px solid #66ad72;border-top:1px solid #66ad72;font-size:8.0px;color:#1d3120">52</div>
<div class="c" style="left:324.26px;top:148.3px;width:32.68px;height:9.98px;line-height:10.38px;box-sizing:border-box;background:#81e586;border-left:1px solid #65b369;border-top:1px solid #65b369;font-size:8.0px;color:#1c321d">55</div>
<div class="c" style="left:356.94px;top:148.3px;width:32.68px;height:9.98px;line-height:10.38px;box-sizing:border-box;background:#82e489;border-left:1px solid #65b16b;border-top:1px solid #65b16b;font-size:8.0px;color:#1c321e">54</div>
<div class="c" style="left:389.62px;top:148.3px;width:32.68px;height:9.98px;line-height:10.38px;box-sizing:border-box;background:#9ee07d;border-left:1px solid #7baf62;border-top:1px solid #7baf62;font-size:8.0px;color:#23311c">61</div>
<div class="c" style="left:422.30px;top:148.3px;width:32.68px;height:9.98px;line-height:10.38px;box-sizing:border-box;background:#81e586;border-left:1px solid #65b369;border-top:1px solid #65b369;font-size:8.0px;color:#1c321d">55</div>
<div class="c" style="left:454.98px;top:148.3px;width:32.68px;height:9.98px;line-height:10.38px;box-sizing:border-box;background:#83db99;border-left:1px solid #66ab78;border-top:1px solid #66ab78;font-size:8.0px;color:#1d3022">51</div>
<div class="c" style="left:487.66px;top:148.3px;width:32.68px;height:9.98px;line-height:10.38px;box-sizing:border-box;background:#84d7a0;border-left:1px solid #67a87d;border-top:1px solid #67a87d;font-size:8.0px;color:#1d2f23">50</div>
<div class="c" style="left:258.90px;top:158.3px;width:32.68px;height:9.98px;line-height:10.38px;box-sizing:border-box;background:#83de93;border-left:1px solid #66ad72;border-top:1px solid #66ad72;font-size:8.0px;color:#1d3120">52</div>
<div class="c" style="left:291.58px;top:158.3px;width:32.68px;height:9.98px;line-height:10.38px;box-sizing:border-box;background:#83db99;border-left:1px solid #66ab78;border-top:1px solid #66ab78;font-size:8.0px;color:#1d3022">51</div>
<div class="c" style="left:324.26px;top:158.3px;width:32.68px;height:9.98px;line-height:10.38px;box-sizing:border-box;background:#82e28c;border-left:1px solid #65b06d;border-top:1px solid #65b06d;font-size:8.0px;color:#1d321f">53</div>
<div class="c" style="left:356.94px;top:158.3px;width:32.68px;height:9.98px;line-height:10.38px;box-sizing:border-box;background:#82e28c;border-left:1px solid #65b06d;border-top:1px solid #65b06d;font-size:8.0px;color:#1d321f">53</div>
<div class="c" style="left:389.62px;top:158.3px;width:32.68px;height:9.98px;line-height:10.38px;box-sizing:border-box;background:#80e880;border-left:1px solid #64b564;border-top:1px solid #64b564;font-size:8.0px;color:#1c331c">57</div>
<div class="c" style="left:422.30px;top:158.3px;width:32.68px;height:9.98px;line-height:10.38px;box-sizing:border-box;background:#82e489;border-left:1px solid #65b16b;border-top:1px solid #65b16b;font-size:8.0px;color:#1c321e">54</div>
<div class="c" style="left:454.98px;top:158.3px;width:32.68px;height:9.98px;line-height:10.38px;box-sizing:border-box;background:#83db99;border-left:1px solid #66ab78;border-top:1px solid #66ab78;font-size:8.0px;color:#1d3022">51</div>
<div class="c" style="left:487.66px;top:158.3px;width:32.68px;height:9.98px;line-height:10.38px;box-sizing:border-box;background:#84d7a0;border-left:1px solid #67a87d;border-top:1px solid #67a87d;font-size:8.0px;color:#1d2f23">50</div>
<div class="c" style="left:258.90px;top:168.2px;width:32.68px;height:9.98px;line-height:10.38px;box-sizing:border-box;background:#84d7a0;border-left:1px solid #67a87d;border-top:1px solid #67a87d;font-size:8.0px;color:#1d2f23">50</div>
<div class="c" style="left:291.58px;top:168.2px;width:32.68px;height:9.98px;line-height:10.38px;box-sizing:border-box;background:#85d2aa;border-left:1px solid #68a485;border-top:1px solid #68a485;font-size:8.0px;color:#1d2e25">49</div>
<div class="c" style="left:324.26px;top:168.2px;width:32.68px;height:9.98px;line-height:10.38px;box-sizing:border-box;background:#83db99;border-left:1px solid #66ab78;border-top:1px solid #66ab78;font-size:8.0px;color:#1d3022">51</div>
<div class="c" style="left:356.94px;top:168.2px;width:32.68px;height:9.98px;line-height:10.38px;box-sizing:border-box;background:#82e28c;border-left:1px solid #65b06d;border-top:1px solid #65b06d;font-size:8.0px;color:#1d321f">53</div>
<div class="c" style="left:389.62px;top:168.2px;width:32.68px;height:9.98px;line-height:10.38px;box-sizing:border-box;background:#82e28c;border-left:1px solid #65b06d;border-top:1px solid #65b06d;font-size:8.0px;color:#1d321f">53</div>
<div class="c" style="left:422.30px;top:168.2px;width:32.68px;height:9.98px;line-height:10.38px;box-sizing:border-box;background:#83de93;border-left:1px solid #66ad72;border-top:1px solid #66ad72;font-size:8.0px;color:#1d3120">52</div>
<div class="c" style="left:454.98px;top:168.2px;width:32.68px;height:9.98px;line-height:10.38px;box-sizing:border-box;background:#83db99;border-left:1px solid #66ab78;border-top:1px solid #66ab78;font-size:8.0px;color:#1d3022">51</div>
<div class="c" style="left:487.66px;top:168.2px;width:32.68px;height:9.98px;line-height:10.38px;box-sizing:border-box;background:#86cdb4;border-left:1px solid #69a08c;border-top:1px solid #69a08c;font-size:8.0px;color:#1d2d28">48</div>
<div class="c" style="left:258.90px;top:178.2px;width:32.68px;height:9.98px;line-height:10.38px;box-sizing:border-box;background:#87c8be;border-left:1px solid #699c94;border-top:1px solid #699c94;font-size:8.0px;color:#1e2c2a">47</div>
<div class="c" style="left:291.58px;top:178.2px;width:32.68px;height:9.98px;line-height:10.38px;box-sizing:border-box;background:#87c8be;border-left:1px solid #699c94;border-top:1px solid #699c94;font-size:8.0px;color:#1e2c2a">47</div>
<div class="c" style="left:324.26px;top:178.2px;width:32.68px;height:9.98px;line-height:10.38px;box-sizing:border-box;background:#86cdb4;border-left:1px solid #69a08c;border-top:1px solid #69a08c;font-size:8.0px;color:#1d2d28">48</div>
<div class="c" style="left:356.94px;top:178.2px;width:32.68px;height:9.98px;line-height:10.38px;box-sizing:border-box;background:#83db99;border-left:1px solid #66ab78;border-top:1px solid #66ab78;font-size:8.0px;color:#1d3022">51</div>
<div class="c" style="left:389.62px;top:178.2px;width:32.68px;height:9.98px;line-height:10.38px;box-sizing:border-box;background:#83db99;border-left:1px solid #66ab78;border-top:1px solid #66ab78;font-size:8.0px;color:#1d3022">51</div>
<div class="c" style="left:422.30px;top:178.2px;width:32.68px;height:9.98px;line-height:10.38px;box-sizing:border-box;background:#83de93;border-left:1px solid #66ad72;border-top:1px solid #66ad72;font-size:8.0px;color:#1d3120">52</div>
<div class="c" style="left:454.98px;top:178.2px;width:32.68px;height:9.98px;line-height:10.38px;box-sizing:border-box;background:#86cdb4;border-left:1px solid #69a08c;border-top:1px solid #69a08c;font-size:8.0px;color:#1d2d28">48</div>
<div class="c" style="left:487.66px;top:178.2px;width:32.68px;height:9.98px;line-height:10.38px;box-sizing:border-box;background:#86cdb4;border-left:1px solid #69a08c;border-top:1px solid #69a08c;font-size:8.0px;color:#1d2d28">48</div>
<div class="c" style="left:258.90px;top:188.2px;width:32.68px;height:9.98px;line-height:10.38px;box-sizing:border-box;background:#87c0ca;border-left:1px solid #69969e;border-top:1px solid #69969e;font-size:8.0px;color:#1e2a2d">46</div>
<div class="c" style="left:291.58px;top:188.2px;width:32.68px;height:9.98px;line-height:10.38px;box-sizing:border-box;background:#87c8be;border-left:1px solid #699c94;border-top:1px solid #699c94;font-size:8.0px;color:#1e2c2a">47</div>
<div class="c" style="left:324.26px;top:188.2px;width:32.68px;height:9.98px;line-height:10.38px;box-sizing:border-box;background:#86cdb4;border-left:1px solid #69a08c;border-top:1px solid #69a08c;font-size:8.0px;color:#1d2d28">48</div>
<div class="c" style="left:356.94px;top:188.2px;width:32.68px;height:9.98px;line-height:10.38px;box-sizing:border-box;background:#84d7a0;border-left:1px solid #67a87d;border-top:1px solid #67a87d;font-size:8.0px;color:#1d2f23">50</div>
<div class="c" style="left:389.62px;top:188.2px;width:32.68px;height:9.98px;line-height:10.38px;box-sizing:border-box;background:#84d7a0;border-left:1px solid #67a87d;border-top:1px solid #67a87d;font-size:8.0px;color:#1d2f23">50</div>
<div class="c" style="left:422.30px;top:188.2px;width:32.68px;height:9.98px;line-height:10.38px;box-sizing:border-box;background:#85d2aa;border-left:1px solid #68a485;border-top:1px solid #68a485;font-size:8.0px;color:#1d2e25">49</div>
<div class="c" style="left:454.98px;top:188.2px;width:32.68px;height:9.98px;line-height:10.38px;box-sizing:border-box;background:#87c8be;border-left:1px solid #699c94;border-top:1px solid #699c94;font-size:8.0px;color:#1e2c2a">47</div>
<div class="c" style="left:487.66px;top:188.2px;width:32.68px;height:9.98px;line-height:10.38px;box-sizing:border-box;background:#87c0ca;border-left:1px solid #69969e;border-top:1px solid #69969e;font-size:8.0px;color:#1e2a2d">46</div>
<div class="c" style="left:258.90px;top:198.2px;width:32.68px;height:9.98px;line-height:10.38px;box-sizing:border-box;background:#87c0ca;border-left:1px solid #69969e;border-top:1px solid #69969e;font-size:8.0px;color:#1e2a2d">46</div>
<div class="c" style="left:291.58px;top:198.2px;width:32.68px;height:9.98px;line-height:10.38px;box-sizing:border-box;background:#87c0ca;border-left:1px solid #69969e;border-top:1px solid #69969e;font-size:8.0px;color:#1e2a2d">46</div>
<div class="c" style="left:324.26px;top:198.2px;width:32.68px;height:9.98px;line-height:10.38px;box-sizing:border-box;background:#87b9d7;border-left:1px solid #6990a8;border-top:1px solid #6990a8;font-size:8.0px;color:#1e292f">45</div>
<div class="c" style="left:356.94px;top:198.2px;width:32.68px;height:9.98px;line-height:10.38px;box-sizing:border-box;background:#86cdb4;border-left:1px solid #69a08c;border-top:1px solid #69a08c;font-size:8.0px;color:#1d2d28">48</div>
<div class="c" style="left:389.62px;top:198.2px;width:32.68px;height:9.98px;line-height:10.38px;box-sizing:border-box;background:#85d2aa;border-left:1px solid #68a485;border-top:1px solid #68a485;font-size:8.0px;color:#1d2e25">49</div>
<div class="c" style="left:422.30px;top:198.2px;width:32.68px;height:9.98px;line-height:10.38px;box-sizing:border-box;background:#86cdb4;border-left:1px solid #69a08c;border-top:1px solid #69a08c;font-size:8.0px;color:#1d2d28">48</div>
<div class="c" style="left:454.98px;top:198.2px;width:32.68px;height:9.98px;line-height:10.38px;box-sizing:border-box;background:#86cdb4;border-left:1px solid #69a08c;border-top:1px solid #69a08c;font-size:8.0px;color:#1d2d28">48</div>
<div class="c" style="left:487.66px;top:198.2px;width:32.68px;height:9.98px;line-height:10.38px;box-sizing:border-box;background:#87c0ca;border-left:1px solid #69969e;border-top:1px solid #69969e;font-size:8.0px;color:#1e2a2d">46</div>
<div class="c" style="left:258.90px;top:208.2px;width:32.68px;height:9.98px;line-height:10.38px;box-sizing:border-box;background:#87b9d7;border-left:1px solid #6990a8;border-top:1px solid #6990a8;font-size:8.0px;color:#1e292f">45</div>
<div class="c" style="left:291.58px;top:208.2px;width:32.68px;height:9.98px;line-height:10.38px;box-sizing:border-box;background:#87b9d7;border-left:1px solid #6990a8;border-top:1px solid #6990a8;font-size:8.0px;color:#1e292f">45</div>
<div class="c" style="left:324.26px;top:208.2px;width:32.68px;height:9.98px;line-height:10.38px;box-sizing:border-box;background:#879eec;border-left:1px solid #697bb8;border-top:1px solid #697bb8;font-size:8.0px;color:#1e2334">42</div>
<div class="c" style="left:356.94px;top:208.2px;width:32.68px;height:9.98px;line-height:10.38px;box-sizing:border-box;background:#8796f0;border-left:1px solid #6975bb;border-top:1px solid #6975bb;font-size:8.0px;color:#1e2135">41</div>
<div class="c" style="left:389.62px;top:208.2px;width:32.68px;height:9.98px;line-height:10.38px;box-sizing:border-box;background:#87c0ca;border-left:1px solid #69969e;border-top:1px solid #69969e;font-size:8.0px;color:#1e2a2d">46</div>
<div class="c" style="left:422.30px;top:208.2px;width:32.68px;height:9.98px;line-height:10.38px;box-sizing:border-box;background:#87b0e0;border-left:1px solid #6989ae;border-top:1px solid #6989ae;font-size:8.0px;color:#1e2731">44</div>
<div class="c" style="left:454.98px;top:208.2px;width:32.68px;height:9.98px;line-height:10.38px;box-sizing:border-box;background:#87b9d7;border-left:1px solid #6990a8;border-top:1px solid #6990a8;font-size:8.0px;color:#1e292f">45</div>
<div class="c" style="left:487.66px;top:208.2px;width:32.68px;height:9.98px;line-height:10.38px;box-sizing:border-box;background:#87a6e8;border-left:1px solid #6981b5;border-top:1px solid #6981b5;font-size:8.0px;color:#1e2533">43</div>
<div class="c" style="left:258.90px;top:218.1px;width:32.68px;height:9.98px;line-height:10.38px;box-sizing:border-box;background:#87b9d7;border-left:1px solid #6990a8;border-top:1px solid #6990a8;font-size:8.0px;color:#1e292f">45</div>
<div class="c" style="left:291.58px;top:218.1px;width:32.68px;height:9.98px;line-height:10.38px;box-sizing:border-box;background:#87a6e8;border-left:1px solid #6981b5;border-top:1px solid #6981b5;font-size:8.0px;color:#1e2533">43</div>
<div class="c" style="left:324.26px;top:218.1px;width:32.68px;height:9.98px;line-height:10.38px;box-sizing:border-box;background:#8385fb;border-left:1px solid #6668c4;border-top:1px solid #6668c4;font-size:8.0px;color:#1d1d37">37</div>
<div class="c" style="left:356.94px;top:218.1px;width:32.68px;height:9.98px;line-height:10.38px;box-sizing:border-box;background:#8488fa;border-left:1px solid #676ac3;border-top:1px solid #676ac3;font-size:8.0px;color:#1d1e37">38</div>
<div class="c" style="left:389.62px;top:218.1px;width:32.68px;height:9.98px;line-height:10.38px;box-sizing:border-box;background:#8183fb;border-left:1px solid #6566c4;border-top:1px solid #6566c4;font-size:8.0px;color:#1c1d37">36</div>
<div class="c" style="left:422.30px;top:218.1px;width:32.68px;height:9.98px;line-height:10.38px;box-sizing:border-box;background:#8488fa;border-left:1px solid #676ac3;border-top:1px solid #676ac3;font-size:8.0px;color:#1d1e37">38</div>
<div class="c" style="left:454.98px;top:218.1px;width:32.68px;height:9.98px;line-height:10.38px;box-sizing:border-box;background:#858df7;border-left:1px solid #686ec0;border-top:1px solid #686ec0;font-size:8.0px;color:#1d1f36">39</div>
<div class="c" style="left:487.66px;top:218.1px;width:32.68px;height:9.98px;line-height:10.38px;box-sizing:border-box;background:#8796f0;border-left:1px solid #6975bb;border-top:1px solid #6975bb;font-size:8.0px;color:#1e2135">41</div>
<div class="c" style="left:258.90px;top:228.1px;width:32.68px;height:9.98px;line-height:10.38px;box-sizing:border-box;background:#87a6e8;border-left:1px solid #6981b5;border-top:1px solid #6981b5;font-size:8.0px;color:#1e2533">43</div>
<div class="c" style="left:291.58px;top:228.1px;width:32.68px;height:9.98px;line-height:10.38px;box-sizing:border-box;background:#8796f0;border-left:1px solid #6975bb;border-top:1px solid #6975bb;font-size:8.0px;color:#1e2135">41</div>
<div class="c" style="left:324.26px;top:228.1px;width:32.68px;height:9.98px;line-height:10.38px;box-sizing:border-box;background:#858df7;border-left:1px solid #686ec0;border-top:1px solid #686ec0;font-size:8.0px;color:#1d1f36">39</div>
<div class="c" style="left:356.94px;top:228.1px;width:32.68px;height:9.98px;line-height:10.38px;box-sizing:border-box;background:#8488fa;border-left:1px solid #676ac3;border-top:1px solid #676ac3;font-size:8.0px;color:#1d1e37">38</div>
<div class="c" style="left:389.62px;top:228.1px;width:32.68px;height:9.98px;line-height:10.38px;box-sizing:border-box;background:#8183fb;border-left:1px solid #6566c4;border-top:1px solid #6566c4;font-size:8.0px;color:#1c1d37">36</div>
<div class="c" style="left:422.30px;top:228.1px;width:32.68px;height:9.98px;line-height:10.38px;box-sizing:border-box;background:#8080fc;border-left:1px solid #6464c5;border-top:1px solid #6464c5;font-size:8.0px;color:#1c1c37">35</div>
<div class="c" style="left:454.98px;top:228.1px;width:32.68px;height:9.98px;line-height:10.38px;box-sizing:border-box;background:#8183fb;border-left:1px solid #6566c4;border-top:1px solid #6566c4;font-size:8.0px;color:#1c1d37">36</div>
<div class="c" style="left:487.66px;top:228.1px;width:32.68px;height:9.98px;line-height:10.38px;box-sizing:border-box;background:#8385fb;border-left:1px solid #6668c4;border-top:1px solid #6668c4;font-size:8.0px;color:#1d1d37">37</div>
<div class="c" style="left:258.90px;top:238.1px;width:32.68px;height:9.98px;line-height:10.38px;box-sizing:border-box;background:#8488fa;border-left:1px solid #676ac3;border-top:1px solid #676ac3;font-size:8.0px;color:#1d1e37">38</div>
<div class="c" style="left:291.58px;top:238.1px;width:32.68px;height:9.98px;line-height:10.38px;box-sizing:border-box;background:#8385fb;border-left:1px solid #6668c4;border-top:1px solid #6668c4;font-size:8.0px;color:#1d1d37">37</div>
<div class="c" style="left:324.26px;top:238.1px;width:32.68px;height:9.98px;line-height:10.38px;box-sizing:border-box;background:#8488fa;border-left:1px solid #676ac3;border-top:1px solid #676ac3;font-size:8.0px;color:#1d1e37">38</div>
<div class="c" style="left:356.94px;top:238.1px;width:32.68px;height:9.98px;line-height:10.38px;box-sizing:border-box;background:#8488fa;border-left:1px solid #676ac3;border-top:1px solid #676ac3;font-size:8.0px;color:#1d1e37">38</div>
<div class="c" style="left:389.62px;top:238.1px;width:32.68px;height:9.98px;line-height:10.38px;box-sizing:border-box;background:#8488fa;border-left:1px solid #676ac3;border-top:1px solid #676ac3;font-size:8.0px;color:#1d1e37">38</div>
<div class="c" style="left:422.30px;top:238.1px;width:32.68px;height:9.98px;line-height:10.38px;box-sizing:border-box;background:#8488fa;border-left:1px solid #676ac3;border-top:1px solid #676ac3;font-size:8.0px;color:#1d1e37">38</div>
<div class="c" style="left:454.98px;top:238.1px;width:32.68px;height:9.98px;line-height:10.38px;box-sizing:border-box;background:#858df7;border-left:1px solid #686ec0;border-top:1px solid #686ec0;font-size:8.0px;color:#1d1f36">39</div>
<div class="c" style="left:487.66px;top:238.1px;width:32.68px;height:9.98px;line-height:10.38px;box-sizing:border-box;background:#858df7;border-left:1px solid #686ec0;border-top:1px solid #686ec0;font-size:8.0px;color:#1d1f36">39</div>
<div class="a" style="left:471.0px;top:90.9px;width:5px;height:5px;border-radius:3px;background:#1010c8"></div>
<div class="a" style="left:226px;top:248.1px;width:32.9px;height:17px;background:#c9c9c9"></div>
<div class="a" style="left:258.9px;top:248.1px;width:261.4px;height:17px;background:#c9c9c9"></div>
<div class="c" style="left:258.90px;top:248.1px;width:31.68px;height:17px;line-height:17px;background:#c9c9c9;border-left:1px solid #f4f4f4;font-size:8.1px;color:#5a5a5a">501</div>
<div class="c" style="left:291.58px;top:248.1px;width:31.68px;height:17px;line-height:17px;background:#c9c9c9;border-left:1px solid #f4f4f4;font-size:8.1px;color:#5a5a5a">800</div>
<div class="c" style="left:324.26px;top:248.1px;width:31.68px;height:17px;line-height:17px;background:#c9c9c9;border-left:1px solid #f4f4f4;font-size:8.1px;color:#5a5a5a">1100</div>
<div class="c" style="left:356.94px;top:248.1px;width:31.68px;height:17px;line-height:17px;background:#c9c9c9;border-left:1px solid #f4f4f4;font-size:8.1px;color:#5a5a5a">1300</div>
<div class="c" style="left:389.62px;top:248.1px;width:31.68px;height:17px;line-height:17px;background:#c9c9c9;border-left:1px solid #f4f4f4;font-size:8.1px;color:#5a5a5a">1600</div>
<div class="c" style="left:422.30px;top:248.1px;width:31.68px;height:17px;line-height:17px;background:#c9c9c9;border-left:1px solid #f4f4f4;font-size:8.1px;color:#5a5a5a">1800</div>
<div class="c" style="left:454.98px;top:248.1px;width:31.68px;height:17px;line-height:17px;background:#c9c9c9;border-left:1px solid #f4f4f4;font-size:8.1px;color:#5a5a5a">2200</div>
<div class="c" style="left:487.66px;top:248.1px;width:31.68px;height:17px;line-height:17px;background:#c9c9c9;border-left:1px solid #f4f4f4;font-size:8.1px;color:#5a5a5a">2500</div>
<div class="a" style="left:489.5px;top:268.5px;font-size:9.8px;line-height:14px;color:#222">rpm</div>
<div class="a" style="left:208px;top:281px;width:312px;height:1px;background:#b5b9c0"></div>
<div class="a" style="left:208px;top:282px;width:312px;height:56px;background:#f2f3f4"></div>
<div class="a" style="left:210px;top:289px;width:310px;height:48px;border:1px solid #d3dae6;border-right:none;box-sizing:border-box"></div>
<div class="a b" style="left:212px;top:282px;height:14px;line-height:14px;padding:0 3px 0 2px;background:#f2f3f4;font-size:9.1px;color:#3c3c3c">VeAnalyze Stats</div>
<div class="a b" style="left:201px;top:296px;width:160px;text-align:right;height:14px;line-height:14px;font-size:9.05px;color:#444">Total Records: 338</div>
<div class="a b" style="left:201px;top:310px;width:160px;text-align:right;height:14px;line-height:14px;font-size:9.05px;color:#444">Total Table Cells: 256</div>
<div class="a b" style="left:203.5px;top:324px;width:160px;text-align:right;height:14px;line-height:14px;font-size:9.05px;color:#444">Average Cell Change: 16.6</div>
<div class="a" style="left:208px;top:338px;width:312px;height:10px;background:#eef2f8 repeating-linear-gradient(90deg,#d3dcea 0,#d3dcea 1px,rgba(255,255,255,0) 1px,rgba(255,255,255,0) 2px) 20px 3px/100% 4px no-repeat;border-top:1px solid #fff;box-sizing:border-box"></div>
<svg class="a" style="left:208px;top:338px" width="40" height="9"><polygon points="3,7 9,7 6,3.8" fill="#6a80ae"/><polygon points="11,4 18,4 14.5,7.2" fill="#6a80ae"/></svg>
<div class="a" style="left:209px;top:347.6px;width:311px;height:84px;background:#000"></div>
<svg class="a" style="left:209px;top:347px" width="311" height="84" viewBox="0 0 311 84">
<g font-size="9.6">
<text x="2" y="9.8" fill="#3fb4b4">8000</text><text x="27" y="9.8" fill="#c81e1e">255.0</text><text x="53.5" y="9.8" fill="#e2e25a">150.0</text><text x="80" y="9.8" fill="#3cc83c">19.40</text>
<text x="2" y="49.2" fill="#3fb4b4">4000</text><text x="27" y="49.2" fill="#c81e1e">127.5</text><text x="53.5" y="49.2" fill="#e2e25a">100.0</text><text x="80" y="49.2" fill="#3cc83c">14.70</text>
</g>
<line x1="0" y1="26.5" x2="311" y2="26.5" stroke="#8a8a8a" stroke-width="1"/>
<line x1="0" y1="51.5" x2="311" y2="51.5" stroke="#9a9a9a" stroke-width="1"/>
<line x1="0" y1="76" x2="311" y2="76" stroke="#b0b0b0" stroke-width="1"/>
<path d="M184.5 84 V51.5 H311" fill="none" stroke="#10e010" stroke-width="1.6"/>
<line x1="185" y1="61.5" x2="311" y2="61.5" stroke="#e01010" stroke-width="1.6"/>
<line x1="185" y1="73" x2="311" y2="73" stroke="#30c8c8" stroke-width="1.4"/>
</svg>
<div class="a" style="left:518px;top:110px;width:282px;height:321px;background:#eeeeee;border-left:2.5px solid #e3e3e3;border-top:3px solid #e3e3e3;box-sizing:border-box"></div>
<div class="a" style="left:520px;top:113px;width:280px;height:13.6px;background:linear-gradient(90deg,#0a246a 0,#12317e 30%,#2c56a8 70%,#4478c8 100%)"></div>
<svg class="a" style="left:522px;top:114px" width="12" height="12"><rect x="1" y="1" width="3" height="8.5" fill="#cfe0f6"/><path d="M4.5 2.5l2.5 4.5M5 6l4.5 4.5M7 6.2l2.6-1" stroke="#a9c4ee" stroke-width="1.6" fill="none"/><rect x="2" y="2.5" width="1.6" height="3" fill="#7fa0dc"/></svg>
<div class="a b" style="left:536px;top:113px;height:15px;line-height:15px;font-size:8.6px;color:#fff">AFR Table 1</div>
<div class="a" style="left:520px;top:126.5px;width:280px;height:17px;background:linear-gradient(#fcfcfc,#f4f4f4 50%,#e9e9e9)"></div>
<div class="a" style="left:525px;top:128.5px;height:14px;line-height:14px;font-size:9.2px;color:#222;-webkit-text-stroke:0.2px #222"><u>F</u>ile</div>
<div class="a" style="left:549px;top:128.8px;height:14px;line-height:14px;font-size:9.8px;color:#222;-webkit-text-stroke:0.2px #222"><u>T</u>ools</div>
<div class="a" style="left:520px;top:143.5px;width:280px;height:20px;background:linear-gradient(#f4f4f4,#efefef 50%,#e8e8e8)"></div>
<div class="a" style="left:520px;top:163px;width:280px;height:268px;background:#f5f5f5;border-top:1px solid #fafafa;box-sizing:border-box"></div>
<div class="a" style="left:534px;top:164.7px;width:270px;height:259px;box-sizing:border-box;border:1.7px solid #787878;border-top-color:#858585;border-bottom:1px solid #d0d0d0;background:linear-gradient(#ffffff 0,#fdfdfd 10px,#e4e4e4 26px,#e9e9e9 27px,#eaeaea 100%)"></div>
<svg class="a" style="left:521px;top:163px" width="12" height="13"><rect x="1" y="3" width="8" height="9" fill="#e2ebf7" stroke="#c5d2e4" stroke-width="0.8"/><line x1="4" y1="8" x2="10" y2="1.5" stroke="#d8d8e0" stroke-width="1.5"/></svg>
<div class="c b" style="left:521px;top:240.3px;width:13px;height:12px;line-height:12px;font-size:9.2px;color:#222">a</div>
<div class="c b" style="left:521px;top:251.9px;width:13px;height:12px;line-height:12px;font-size:9.2px;color:#222">f</div>
<div class="c b" style="left:521px;top:263.4px;width:13px;height:12px;line-height:12px;font-size:9.2px;color:#222">r</div>
<div class="c b" style="left:521px;top:275.0px;width:13px;height:12px;line-height:12px;font-size:9.2px;color:#222">l</div>
<div class="c b" style="left:521px;top:286.5px;width:13px;height:12px;line-height:12px;font-size:9.2px;color:#222">o</div>
<div class="c b" style="left:521px;top:298.1px;width:13px;height:12px;line-height:12px;font-size:9.2px;color:#222">a</div>
<div class="c b" style="left:521px;top:309.6px;width:13px;height:12px;line-height:12px;font-size:9.2px;color:#222">d</div>
<div class="c b" style="left:521px;top:321.2px;width:13px;height:12px;line-height:12px;font-size:9.2px;color:#222">1</div>
<div class="c b" style="left:521px;top:344.2px;width:13px;height:12px;line-height:12px;font-size:9.2px;color:#222">%</div>
<div class="c" style="left:537.7px;top:192.10px;width:34.8px;height:16.52px;line-height:19.02px;background:#c8c8c8;border-bottom:1px solid #9a9a9a;border-right:1px solid #a5a5a5;font-size:10.6px;color:#505050">100.0</div>
<div class="c" style="left:537.7px;top:209.62px;width:34.8px;height:16.52px;line-height:19.02px;background:#c8c8c8;border-bottom:1px solid #9a9a9a;border-right:1px solid #a5a5a5;font-size:10.6px;color:#505050">90.0</div>
<div class="c" style="left:537.7px;top:227.14px;width:34.8px;height:16.52px;line-height:19.02px;background:#c8c8c8;border-bottom:1px solid #9a9a9a;border-right:1px solid #a5a5a5;font-size:10.6px;color:#505050">80.0</div>
<div class="c" style="left:537.7px;top:244.66px;width:34.8px;height:16.52px;line-height:19.02px;background:#c8c8c8;border-bottom:1px solid #9a9a9a;border-right:1px solid #a5a5a5;font-size:10.6px;color:#505050">70.0</div>
<div class="c" style="left:537.7px;top:262.18px;width:34.8px;height:16.52px;line-height:19.02px;background:#c8c8c8;border-bottom:1px solid #9a9a9a;border-right:1px solid #a5a5a5;font-size:10.6px;color:#505050">60.0</div>
<div class="c" style="left:537.7px;top:279.70px;width:34.8px;height:16.52px;line-height:19.02px;background:#c8c8c8;border-bottom:1px solid #9a9a9a;border-right:1px solid #a5a5a5;font-size:10.6px;color:#505050">50.0</div>
<div class="c" style="left:537.7px;top:297.22px;width:34.8px;height:16.52px;line-height:19.02px;background:#c8c8c8;border-bottom:1px solid #9a9a9a;border-right:1px solid #a5a5a5;font-size:10.6px;color:#505050">40.0</div>
<div class="c" style="left:537.7px;top:314.74px;width:34.8px;height:16.52px;line-height:19.02px;background:#c8c8c8;border-bottom:1px solid #9a9a9a;border-right:1px solid #a5a5a5;font-size:10.6px;color:#505050">30.0</div>
<div class="c" style="left:537.7px;top:332.26px;width:34.8px;height:16.52px;line-height:19.02px;background:#c8c8c8;border-bottom:1px solid #9a9a9a;border-right:1px solid #a5a5a5;font-size:10.6px;color:#505050">25.0</div>
<div class="c" style="left:537.7px;top:349.78px;width:34.8px;height:16.52px;line-height:19.02px;background:#c8c8c8;border-bottom:1px solid #9a9a9a;border-right:1px solid #a5a5a5;font-size:10.6px;color:#505050">20.0</div>
<div class="c" style="left:537.7px;top:367.30px;width:34.8px;height:16.52px;line-height:19.02px;background:#c8c8c8;border-bottom:1px solid #9a9a9a;border-right:1px solid #a5a5a5;font-size:10.6px;color:#505050">15.0</div>
<div class="c" style="left:537.7px;top:384.82px;width:34.8px;height:16.52px;line-height:19.02px;background:#c8c8c8;border-bottom:1px solid #9a9a9a;border-right:1px solid #a5a5a5;font-size:10.6px;color:#505050">5.0</div>
<div class="c" style="left:575.00px;top:192.10px;width:37.5px;height:17.52px;line-height:16.12px;box-sizing:border-box;background:#889eec;border-left:1px solid #6d7ebd;border-top:1px solid #6d7ebd;font-size:11.0px;color:#0f0f0f">13.1</div>
<div class="c" style="left:612.50px;top:192.10px;width:37.5px;height:17.52px;line-height:16.12px;box-sizing:border-box;background:#889eec;border-left:1px solid #6d7ebd;border-top:1px solid #6d7ebd;font-size:11.0px;color:#0f0f0f">13.1</div>
<div class="c" style="left:650.00px;top:192.10px;width:37.5px;height:17.52px;line-height:16.12px;box-sizing:border-box;background:#889eec;border-left:1px solid #6d7ebd;border-top:1px solid #6d7ebd;font-size:11.0px;color:#0f0f0f">13.1</div>
<div class="c" style="left:687.50px;top:192.10px;width:37.5px;height:17.52px;line-height:16.12px;box-sizing:border-box;background:#889eec;border-left:1px solid #6d7ebd;border-top:1px solid #6d7ebd;font-size:11.0px;color:#0f0f0f">13.1</div>
<div class="c" style="left:725.00px;top:192.10px;width:37.5px;height:17.52px;line-height:16.12px;box-sizing:border-box;background:#8892f4;border-left:1px solid #6d75c3;border-top:1px solid #6d75c3;font-size:11.0px;color:#0f0f0f">13.0</div>
<div class="c" style="left:762.50px;top:192.10px;width:37.5px;height:17.52px;line-height:16.12px;box-sizing:border-box;background:#8a8afa;border-left:1px solid #6e6ec8;border-top:1px solid #6e6ec8;font-size:11.0px;color:#0f0f0f">12.9</div>
<div class="c" style="left:575.00px;top:209.62px;width:37.5px;height:17.52px;line-height:16.12px;box-sizing:border-box;background:#889eec;border-left:1px solid #6d7ebd;border-top:1px solid #6d7ebd;font-size:11.0px;color:#0f0f0f">13.1</div>
<div class="c" style="left:612.50px;top:209.62px;width:37.5px;height:17.52px;line-height:16.12px;box-sizing:border-box;background:#889eec;border-left:1px solid #6d7ebd;border-top:1px solid #6d7ebd;font-size:11.0px;color:#0f0f0f">13.1</div>
<div class="c" style="left:650.00px;top:209.62px;width:37.5px;height:17.52px;line-height:16.12px;box-sizing:border-box;background:#889eec;border-left:1px solid #6d7ebd;border-top:1px solid #6d7ebd;font-size:11.0px;color:#0f0f0f">13.1</div>
<div class="c" style="left:687.50px;top:209.62px;width:37.5px;height:17.52px;line-height:16.12px;box-sizing:border-box;background:#889eec;border-left:1px solid #6d7ebd;border-top:1px solid #6d7ebd;font-size:11.0px;color:#0f0f0f">13.1</div>
<div class="c" style="left:725.00px;top:209.62px;width:37.5px;height:17.52px;line-height:16.12px;box-sizing:border-box;background:#889eec;border-left:1px solid #6d7ebd;border-top:1px solid #6d7ebd;font-size:11.0px;color:#0f0f0f">13.1</div>
<div class="c" style="left:762.50px;top:209.62px;width:37.5px;height:17.52px;line-height:16.12px;box-sizing:border-box;background:#8892f4;border-left:1px solid #6d75c3;border-top:1px solid #6d75c3;font-size:11.0px;color:#0f0f0f">13.0</div>
<div class="c" style="left:575.00px;top:227.14px;width:37.5px;height:17.52px;line-height:16.12px;box-sizing:border-box;background:#87bcd4;border-left:1px solid #6c96aa;border-top:1px solid #6c96aa;font-size:11.0px;color:#0f0f0f">13.4</div>
<div class="c" style="left:612.50px;top:227.14px;width:37.5px;height:17.52px;line-height:16.12px;box-sizing:border-box;background:#87bcd4;border-left:1px solid #6c96aa;border-top:1px solid #6c96aa;font-size:11.0px;color:#0f0f0f">13.4</div>
<div class="c" style="left:650.00px;top:227.14px;width:37.5px;height:17.52px;line-height:16.12px;box-sizing:border-box;background:#889eec;border-left:1px solid #6d7ebd;border-top:1px solid #6d7ebd;font-size:11.0px;color:#0f0f0f">13.1</div>
<div class="c" style="left:687.50px;top:227.14px;width:37.5px;height:17.52px;line-height:16.12px;box-sizing:border-box;background:#889eec;border-left:1px solid #6d7ebd;border-top:1px solid #6d7ebd;font-size:11.0px;color:#0f0f0f">13.1</div>
<div class="c" style="left:725.00px;top:227.14px;width:37.5px;height:17.52px;line-height:16.12px;box-sizing:border-box;background:#889eec;border-left:1px solid #6d7ebd;border-top:1px solid #6d7ebd;font-size:11.0px;color:#0f0f0f">13.1</div>
<div class="c" style="left:762.50px;top:227.14px;width:37.5px;height:17.52px;line-height:16.12px;box-sizing:border-box;background:#889eec;border-left:1px solid #6d7ebd;border-top:1px solid #6d7ebd;font-size:11.0px;color:#0f0f0f">13.1</div>
<div class="c" style="left:575.00px;top:244.66px;width:37.5px;height:17.52px;line-height:16.12px;box-sizing:border-box;background:#82d5a4;border-left:1px solid #68aa83;border-top:1px solid #68aa83;font-size:11.0px;color:#0f0f0f">13.8</div>
<div class="c" style="left:612.50px;top:244.66px;width:37.5px;height:17.52px;line-height:16.12px;box-sizing:border-box;background:#82e294;border-left:1px solid #68b576;border-top:1px solid #68b576;font-size:11.0px;color:#0f0f0f">13.9</div>
<div class="c" style="left:650.00px;top:244.66px;width:37.5px;height:17.52px;line-height:16.12px;box-sizing:border-box;background:#87afe0;border-left:1px solid #6c8cb3;border-top:1px solid #6c8cb3;font-size:11.0px;color:#0f0f0f">13.3</div>
<div class="c" style="left:687.50px;top:244.66px;width:37.5px;height:17.52px;line-height:16.12px;box-sizing:border-box;background:#889eec;border-left:1px solid #6d7ebd;border-top:1px solid #6d7ebd;font-size:11.0px;color:#0f0f0f">13.1</div>
<div class="c" style="left:725.00px;top:244.66px;width:37.5px;height:17.52px;line-height:16.12px;box-sizing:border-box;background:#889eec;border-left:1px solid #6d7ebd;border-top:1px solid #6d7ebd;font-size:11.0px;color:#0f0f0f">13.1</div>
<div class="c" style="left:762.50px;top:244.66px;width:37.5px;height:17.52px;line-height:16.12px;box-sizing:border-box;background:#889eec;border-left:1px solid #6d7ebd;border-top:1px solid #6d7ebd;font-size:11.0px;color:#0f0f0f">13.1</div>
<div class="c" style="left:575.00px;top:262.18px;width:37.5px;height:17.52px;line-height:16.12px;box-sizing:border-box;background:#b6d482;border-left:1px solid #92aa68;border-top:1px solid #92aa68;font-size:11.0px;color:#0f0f0f">14.5</div>
<div class="c" style="left:612.50px;top:262.18px;width:37.5px;height:17.52px;line-height:16.12px;box-sizing:border-box;background:#b6d482;border-left:1px solid #92aa68;border-top:1px solid #92aa68;font-size:11.0px;color:#0f0f0f">14.5</div>
<div class="c" style="left:650.00px;top:262.18px;width:37.5px;height:17.52px;line-height:16.12px;box-sizing:border-box;background:#b6d482;border-left:1px solid #92aa68;border-top:1px solid #92aa68;font-size:11.0px;color:#0f0f0f">14.5</div>
<div class="c" style="left:687.50px;top:262.18px;width:37.5px;height:17.52px;line-height:16.12px;box-sizing:border-box;background:#85d0b2;border-left:1px solid #6aa68e;border-top:1px solid #6aa68e;font-size:11.0px;color:#0f0f0f">13.7</div>
<div class="c" style="left:725.00px;top:262.18px;width:37.5px;height:17.52px;line-height:16.12px;box-sizing:border-box;background:#87cbbe;border-left:1px solid #6ca298;border-top:1px solid #6ca298;font-size:11.0px;color:#0f0f0f">13.6</div>
<div class="c" style="left:762.50px;top:262.18px;width:37.5px;height:17.52px;line-height:16.12px;box-sizing:border-box;background:#87cbbe;border-left:1px solid #6ca298;border-top:1px solid #6ca298;font-size:11.0px;color:#0f0f0f">13.6</div>
<div class="c" style="left:575.00px;top:279.70px;width:37.5px;height:17.52px;line-height:16.12px;box-sizing:border-box;background:#b6d482;border-left:1px solid #92aa68;border-top:1px solid #92aa68;font-size:11.0px;color:#0f0f0f">14.5</div>
<div class="c" style="left:612.50px;top:279.70px;width:37.5px;height:17.52px;line-height:16.12px;box-sizing:border-box;background:#b6d482;border-left:1px solid #92aa68;border-top:1px solid #92aa68;font-size:11.0px;color:#0f0f0f">14.5</div>
<div class="c" style="left:650.00px;top:279.70px;width:37.5px;height:17.52px;line-height:16.12px;box-sizing:border-box;background:#c2cb80;border-left:1px solid #9ba266;border-top:1px solid #9ba266;font-size:11.0px;color:#0f0f0f">14.6</div>
<div class="c" style="left:687.50px;top:279.70px;width:37.5px;height:17.52px;line-height:16.12px;box-sizing:border-box;background:#c2cb80;border-left:1px solid #9ba266;border-top:1px solid #9ba266;font-size:11.0px;color:#0f0f0f">14.6</div>
<div class="c" style="left:725.00px;top:279.70px;width:37.5px;height:17.52px;line-height:16.12px;box-sizing:border-box;background:#b6d482;border-left:1px solid #92aa68;border-top:1px solid #92aa68;font-size:11.0px;color:#0f0f0f">14.5</div>
<div class="c" style="left:762.50px;top:279.70px;width:37.5px;height:17.52px;line-height:16.12px;box-sizing:border-box;background:#98e482;border-left:1px solid #7ab668;border-top:1px solid #7ab668;font-size:11.0px;color:#0f0f0f">14.3</div>
<div class="c" style="left:575.00px;top:297.22px;width:37.5px;height:17.52px;line-height:16.12px;box-sizing:border-box;background:#b6d482;border-left:1px solid #92aa68;border-top:1px solid #92aa68;font-size:11.0px;color:#0f0f0f">14.5</div>
<div class="c" style="left:612.50px;top:297.22px;width:37.5px;height:17.52px;line-height:16.12px;box-sizing:border-box;background:#b6d482;border-left:1px solid #92aa68;border-top:1px solid #92aa68;font-size:11.0px;color:#0f0f0f">14.5</div>
<div class="c" style="left:650.00px;top:297.22px;width:37.5px;height:17.52px;line-height:16.12px;box-sizing:border-box;background:#c2cb80;border-left:1px solid #9ba266;border-top:1px solid #9ba266;font-size:11.0px;color:#0f0f0f">14.6</div>
<div class="c" style="left:687.50px;top:297.22px;width:37.5px;height:17.52px;line-height:16.12px;box-sizing:border-box;background:#cbc728;border-left:1px solid #a29f20;border-top:1px solid #a29f20;font-size:11.0px;color:#8e8934">14.7</div>
<div class="c" style="left:725.00px;top:297.22px;width:37.5px;height:17.52px;line-height:16.12px;box-sizing:border-box;background:#cbc728;border-left:1px solid #a29f20;border-top:1px solid #a29f20;font-size:11.0px;color:#8e8934">14.7</div>
<div class="c" style="left:762.50px;top:297.22px;width:37.5px;height:17.52px;line-height:16.12px;box-sizing:border-box;background:#b6d482;border-left:1px solid #92aa68;border-top:1px solid #92aa68;font-size:11.0px;color:#0f0f0f">14.5</div>
<div class="c" style="left:575.00px;top:314.74px;width:37.5px;height:17.52px;line-height:16.12px;box-sizing:border-box;background:#b6d482;border-left:1px solid #92aa68;border-top:1px solid #92aa68;font-size:11.0px;color:#0f0f0f">14.5</div>
<div class="c" style="left:612.50px;top:314.74px;width:37.5px;height:17.52px;line-height:16.12px;box-sizing:border-box;background:#b6d482;border-left:1px solid #92aa68;border-top:1px solid #92aa68;font-size:11.0px;color:#0f0f0f">14.5</div>
<div class="c" style="left:650.00px;top:314.74px;width:37.5px;height:17.52px;line-height:16.12px;box-sizing:border-box;background:#ccc480;border-left:1px solid #a39d66;border-top:1px solid #a39d66;font-size:11.0px;color:#0f0f0f">14.7</div>
<div class="c" style="left:687.50px;top:314.74px;width:37.5px;height:17.52px;line-height:16.12px;box-sizing:border-box;background:#cbc728;border-left:1px solid #a29f20;border-top:1px solid #a29f20;font-size:11.0px;color:#8e8934">14.7</div>
<div class="c" style="left:725.00px;top:314.74px;width:37.5px;height:17.52px;line-height:16.12px;box-sizing:border-box;background:#fcf61e;border-left:1px solid #cac518;border-top:1px solid #cac518;font-size:11.0px;color:#141400">14.7</div>
<div class="c" style="left:762.50px;top:314.74px;width:37.5px;height:17.52px;line-height:16.12px;box-sizing:border-box;background:#ccc480;border-left:1px solid #a39d66;border-top:1px solid #a39d66;font-size:11.0px;color:#0f0f0f">14.7</div>
<div class="c" style="left:575.00px;top:332.26px;width:37.5px;height:17.52px;line-height:16.12px;box-sizing:border-box;background:#b6d482;border-left:1px solid #92aa68;border-top:1px solid #92aa68;font-size:11.0px;color:#0f0f0f">14.5</div>
<div class="c" style="left:612.50px;top:332.26px;width:37.5px;height:17.52px;line-height:16.12px;box-sizing:border-box;background:#b6d482;border-left:1px solid #92aa68;border-top:1px solid #92aa68;font-size:11.0px;color:#0f0f0f">14.5</div>
<div class="c" style="left:650.00px;top:332.26px;width:37.5px;height:17.52px;line-height:16.12px;box-sizing:border-box;background:#ccc480;border-left:1px solid #a39d66;border-top:1px solid #a39d66;font-size:11.0px;color:#0f0f0f">14.7</div>
<div class="c" style="left:687.50px;top:332.26px;width:37.5px;height:17.52px;line-height:16.12px;box-sizing:border-box;background:#ccc480;border-left:1px solid #a39d66;border-top:1px solid #a39d66;font-size:11.0px;color:#0f0f0f">14.7</div>
<div class="c" style="left:725.00px;top:332.26px;width:37.5px;height:17.52px;line-height:16.12px;box-sizing:border-box;background:#d8b980;border-left:1px solid #ad9466;border-top:1px solid #ad9466;font-size:11.0px;color:#0f0f0f">14.8</div>
<div class="c" style="left:762.50px;top:332.26px;width:37.5px;height:17.52px;line-height:16.12px;box-sizing:border-box;background:#d8b980;border-left:1px solid #ad9466;border-top:1px solid #ad9466;font-size:11.0px;color:#0f0f0f">14.8</div>
<div class="c" style="left:575.00px;top:349.78px;width:37.5px;height:17.52px;line-height:16.12px;box-sizing:border-box;background:#b6d482;border-left:1px solid #92aa68;border-top:1px solid #92aa68;font-size:11.0px;color:#0f0f0f">14.5</div>
<div class="c" style="left:612.50px;top:349.78px;width:37.5px;height:17.52px;line-height:16.12px;box-sizing:border-box;background:#b6d482;border-left:1px solid #92aa68;border-top:1px solid #92aa68;font-size:11.0px;color:#0f0f0f">14.5</div>
<div class="c" style="left:650.00px;top:349.78px;width:37.5px;height:17.52px;line-height:16.12px;box-sizing:border-box;background:#ccc480;border-left:1px solid #a39d66;border-top:1px solid #a39d66;font-size:11.0px;color:#0f0f0f">14.7</div>
<div class="c" style="left:687.50px;top:349.78px;width:37.5px;height:17.52px;line-height:16.12px;box-sizing:border-box;background:#e3ad82;border-left:1px solid #b68a68;border-top:1px solid #b68a68;font-size:11.0px;color:#0f0f0f">14.9</div>
<div class="c" style="left:725.00px;top:349.78px;width:37.5px;height:17.52px;line-height:16.12px;box-sizing:border-box;background:#eca284;border-left:1px solid #bd826a;border-top:1px solid #bd826a;font-size:11.0px;color:#0f0f0f">15.0</div>
<div class="c" style="left:762.50px;top:349.78px;width:37.5px;height:17.52px;line-height:16.12px;box-sizing:border-box;background:#f49a8a;border-left:1px solid #c37b6e;border-top:1px solid #c37b6e;font-size:11.0px;color:#0f0f0f">15.1</div>
<div class="c" style="left:575.00px;top:367.30px;width:37.5px;height:17.52px;line-height:16.12px;box-sizing:border-box;background:#b6d482;border-left:1px solid #92aa68;border-top:1px solid #92aa68;font-size:11.0px;color:#0f0f0f">14.5</div>
<div class="c" style="left:612.50px;top:367.30px;width:37.5px;height:17.52px;line-height:16.12px;box-sizing:border-box;background:#b6d482;border-left:1px solid #92aa68;border-top:1px solid #92aa68;font-size:11.0px;color:#0f0f0f">14.5</div>
<div class="c" style="left:650.00px;top:367.30px;width:37.5px;height:17.52px;line-height:16.12px;box-sizing:border-box;background:#d8b980;border-left:1px solid #ad9466;border-top:1px solid #ad9466;font-size:11.0px;color:#0f0f0f">14.8</div>
<div class="c" style="left:687.50px;top:367.30px;width:37.5px;height:17.52px;line-height:16.12px;box-sizing:border-box;background:#f49a8a;border-left:1px solid #c37b6e;border-top:1px solid #c37b6e;font-size:11.0px;color:#0f0f0f">15.1</div>
<div class="c" style="left:725.00px;top:367.30px;width:37.5px;height:17.52px;line-height:16.12px;box-sizing:border-box;background:#fa8e8c;border-left:1px solid #c87270;border-top:1px solid #c87270;font-size:11.0px;color:#0f0f0f">15.3</div>
<div class="c" style="left:762.50px;top:367.30px;width:37.5px;height:17.52px;line-height:16.12px;box-sizing:border-box;background:#fa8e8c;border-left:1px solid #c87270;border-top:1px solid #c87270;font-size:11.0px;color:#0f0f0f">15.3</div>
<div class="c" style="left:575.00px;top:384.82px;width:37.5px;height:17.52px;line-height:16.12px;box-sizing:border-box;background:#b6d482;border-left:1px solid #92aa68;border-top:1px solid #92aa68;font-size:11.0px;color:#0f0f0f">14.5</div>
<div class="c" style="left:612.50px;top:384.82px;width:37.5px;height:17.52px;line-height:16.12px;box-sizing:border-box;background:#b6d482;border-left:1px solid #92aa68;border-top:1px solid #92aa68;font-size:11.0px;color:#0f0f0f">14.5</div>
<div class="c" style="left:650.00px;top:384.82px;width:37.5px;height:17.52px;line-height:16.12px;box-sizing:border-box;background:#e3ad82;border-left:1px solid #b68a68;border-top:1px solid #b68a68;font-size:11.0px;color:#0f0f0f">14.9</div>
<div class="c" style="left:687.50px;top:384.82px;width:37.5px;height:17.52px;line-height:16.12px;box-sizing:border-box;background:#f7948b;border-left:1px solid #c6766f;border-top:1px solid #c6766f;font-size:11.0px;color:#0f0f0f">15.2</div>
<div class="c" style="left:725.00px;top:384.82px;width:37.5px;height:17.52px;line-height:16.12px;box-sizing:border-box;background:#fc8989;border-left:1px solid #ca6e6e;border-top:1px solid #ca6e6e;font-size:11.0px;color:#0f0f0f">15.4</div>
<div class="c" style="left:762.50px;top:384.82px;width:37.5px;height:17.52px;line-height:16.12px;box-sizing:border-box;background:#fc8989;border-left:1px solid #ca6e6e;border-top:1px solid #ca6e6e;font-size:11.0px;color:#0f0f0f">15.4</div>
<div class="a" style="left:734.5px;top:318.2px;width:4px;height:5px;border-radius:2px;background:#1010c8"></div>
<div class="a" style="left:538px;top:402.34px;width:37px;height:19px;background:#c9c9c9"></div>
<div class="c" style="left:575.00px;top:402.34px;width:36.5px;height:19px;line-height:19px;background:#c9c9c9;border-left:1px solid #f4f4f4;font-size:11.2px;color:#585858">700</div>
<div class="c" style="left:612.50px;top:402.34px;width:36.5px;height:19px;line-height:19px;background:#c9c9c9;border-left:1px solid #f4f4f4;font-size:11.2px;color:#585858">1100</div>
<div class="c" style="left:650.00px;top:402.34px;width:36.5px;height:19px;line-height:19px;background:#c9c9c9;border-left:1px solid #f4f4f4;font-size:11.2px;color:#585858">1400</div>
<div class="c" style="left:687.50px;top:402.34px;width:36.5px;height:19px;line-height:19px;background:#c9c9c9;border-left:1px solid #f4f4f4;font-size:11.2px;color:#585858">1800</div>
<div class="c" style="left:725.00px;top:402.34px;width:36.5px;height:19px;line-height:19px;background:#c9c9c9;border-left:1px solid #f4f4f4;font-size:11.2px;color:#585858">2300</div>
<div class="c" style="left:762.50px;top:402.34px;width:36.5px;height:19px;line-height:19px;background:#c9c9c9;border-left:1px solid #f4f4f4;font-size:11.2px;color:#585858">2800</div>
<div class="a" style="left:766.5px;top:425.2px;font-size:10px;line-height:12px;color:#222">rpm</div>
</body></html>
